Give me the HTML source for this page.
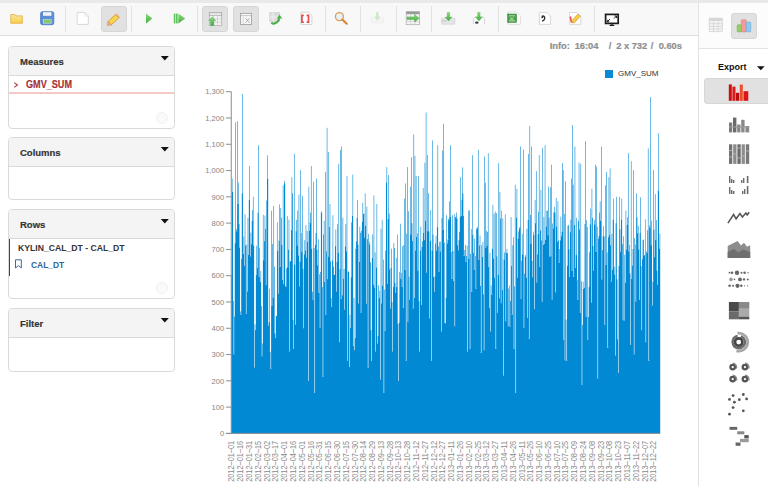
<!DOCTYPE html>
<html><head><meta charset="utf-8">
<style>
*{box-sizing:border-box}
html,body{margin:0;padding:0;width:768px;height:486px;overflow:hidden;background:#fff;font-family:"Liberation Sans",sans-serif;position:relative}
.a{position:absolute}
#topband{left:0;top:0;width:768px;height:3px;background:#e9e9e9}
#toolbar{left:0;top:3px;width:699px;height:33px;background:#f8f8f8;border-bottom:1px solid #dcdcdc}
.sep{position:absolute;top:6px;width:1px;height:26px;background:#e2e2e2}
.pbtn{position:absolute;top:6px;height:26px;background:#e1e1e1;border:1px solid #d6d6d6;border-radius:3px}
#rpanel{left:698px;top:3px;width:70px;height:483px;border-left:1px solid #e0e0e0;background:#fff}
#rtop{left:699px;top:3px;width:69px;height:46px;background:#fcfcfc;border-bottom:1px solid #e3e3e3}
.panel{position:absolute;left:8px;width:167px;border:1px solid #dadada;border-radius:4px;background:#fff;overflow:hidden}
.ph{position:absolute;left:0;top:0;width:100%;background:#f4f4f4;border-bottom:1px solid #dadada}
.pt{position:absolute;left:11px;font-size:9.5px;font-weight:bold;color:#333;line-height:10px;-webkit-text-stroke:0.15px #333}
.tri{position:absolute;width:0;height:0;border-left:4.5px solid transparent;border-right:4.5px solid transparent;border-top:5px solid #111}
.info{position:absolute;top:41.3px;font-size:9.3px;font-weight:bold;color:#8e8e8e;line-height:11px;white-space:nowrap;-webkit-text-stroke:0.2px #8e8e8e}
</style></head><body>
<div id="topband" class="a"></div>
<div id="toolbar" class="a">
</div>
<div class="sep" style="left:65px;top:6px"></div>
<div class="sep" style="left:131px;top:6px"></div>
<div class="sep" style="left:197px;top:6px"></div>
<div class="sep" style="left:325px;top:6px"></div>
<div class="sep" style="left:360px;top:6px"></div>
<div class="sep" style="left:396px;top:6px"></div>
<div class="sep" style="left:431px;top:6px"></div>
<div class="sep" style="left:498px;top:6px"></div>
<div class="sep" style="left:594px;top:6px"></div>
<div class="pbtn" style="left:101px;width:26px"></div>
<div class="pbtn" style="left:202px;width:26px"></div>
<div class="pbtn" style="left:233px;width:26px"></div>

<div id="rpanel" class="a"></div>
<div id="rtop" class="a"></div>
<div class="pbtn" style="left:731px;top:13px;width:26px;height:25.5px"></div>
<div class="a" style="left:718px;top:62px;font-size:9px;font-weight:bold;color:#111;line-height:10px">Export</div>
<div class="pbtn" style="left:704px;top:78px;width:70px;height:26px"></div>

<svg class="a" style="left:0;top:0" width="768" height="486" viewBox="0 0 768 486">
<defs>
<linearGradient id="gy" x1="0" y1="0" x2="0" y2="1"><stop offset="0" stop-color="#fbe9a6"/><stop offset="1" stop-color="#f6cf3e"/></linearGradient>
<linearGradient id="gg" x1="0" y1="0" x2="0" y2="1"><stop offset="0" stop-color="#8fdc7c"/><stop offset="1" stop-color="#3fae3f"/></linearGradient>
<linearGradient id="ga" x1="0" y1="0" x2="0" y2="1"><stop offset="0" stop-color="#777"/><stop offset="1" stop-color="#999"/></linearGradient>
</defs>
<!-- folder -->
<path d="M10.8 14.6h4.2l1 1.3h6.3v7.3H10.8z" fill="url(#gy)" stroke="#e7ad4e" stroke-width="0.9"/>
<path d="M11.3 17.2h10.9" stroke="#f3d98a" stroke-width="0.8"/>
<!-- save -->
<rect x="40.6" y="11.7" width="13.2" height="13" rx="1.8" fill="#5b8ed8" stroke="#4a78c0" stroke-width="0.8"/>
<rect x="43" y="12.2" width="8.4" height="3.6" fill="#f2f4f8"/>
<rect x="43.2" y="19.6" width="8" height="3.6" fill="#86c96b" stroke="#e6f0e0" stroke-width="0.5"/>
<!-- new doc -->
<path d="M77.2 12.4h7.6l3.5 3.5v8.5H77.2z" fill="#fff" stroke="#d4d4d4" stroke-width="0.9"/>
<path d="M84.6 12.4v3.7h3.7" fill="none" stroke="#dedede" stroke-width="0.7"/>
<!-- pencil -->
<g transform="translate(114.2 19) rotate(-43)">
<rect x="-6.2" y="-2.3" width="11" height="4.6" rx="0.6" fill="#f7d84a" stroke="#d9953a" stroke-width="0.9"/>
<path d="M-6.2 -2.3L-9.2 0L-6.2 2.3z" fill="#f4c890" stroke="#c98a4a" stroke-width="0.7"/>
<rect x="3.6" y="-2.3" width="1.8" height="4.6" fill="#e9a760"/>
</g>
<!-- play -->
<path d="M146 13.4L152.4 18.5L146 23.6z" fill="url(#gg)"/>
<!-- double play -->
<rect x="173.8" y="13.6" width="1.6" height="9.8" fill="#5cc35c"/>
<rect x="176" y="13.6" width="1.6" height="9.8" fill="#5cc35c"/>
<path d="M178.3 13.4L185.2 18.5L178.3 23.6z" fill="url(#gg)"/>
<!-- table with up arrow -->
<rect x="209.3" y="12.4" width="12.4" height="13.1" fill="#f4f4f4" stroke="#a8a8a8" stroke-width="0.7"/>
<rect x="209.3" y="12.4" width="12.4" height="3.3" fill="#e6e6e6" stroke="#a8a8a8" stroke-width="0.7"/>
<path d="M213.5 15.7v9.8M217.5 15.7v9.8M209.3 19h12.4M209.3 22.2h12.4" stroke="#c2c2c2" stroke-width="0.6"/>
<path d="M212.2 17.1L215.6 20.4H213.8V25.6H210.6V20.4H208.8z" fill="url(#gg)" stroke="#3c9a3c" stroke-width="0.4"/>
<!-- table with x -->
<rect x="240.4" y="13.3" width="11.2" height="11.3" fill="#f6f6f6" stroke="#9a9a9a" stroke-width="0.8"/>
<path d="M241 15.6h10" stroke="#bdbdbd" stroke-width="0.8"/>
<path d="M243.2 16.5v7.5" stroke="#c8c8c8" stroke-width="0.6"/>
<path d="M245.5 18.2l4 4.5M249.5 18.2l-4 4.5" stroke="#9c9c9c" stroke-width="0.8"/>
<!-- swap icon -->
<rect x="269.8" y="12.3" width="9.8" height="9.5" fill="#dedede" stroke="#c9c9c9" stroke-width="0.5"/>
<path d="M269.8 17h9.8M273 12.3v9.5" stroke="#f4f4f4" stroke-width="0.8"/>
<ellipse cx="277.3" cy="14.3" rx="1.8" ry="0.8" fill="#bcd8f5"/>
<path d="M273 23.6c2.5 0.2 5.5-1.5 6.2-5.3" fill="none" stroke="#4cae4c" stroke-width="2.3"/>
<path d="M276.8 18.2L279.6 14.8L282.4 18.6z" fill="#4cae4c"/>
<path d="M272.3 21.2L273.5 25L270.6 23.8z" fill="#4cae4c"/>
<!-- red bracket doc -->
<path d="M301 12.2h7.4l3.5 3.4v8.9H301z" fill="#fff" stroke="#d1d1d1" stroke-width="0.9"/>
<path d="M303.8 15.3h-1.9v6.8h1.9M306.6 15.3h1.9v6.8h-1.9" fill="none" stroke="#ea4b4b" stroke-width="1.7"/>
<!-- magnifier -->
<circle cx="339.4" cy="16.6" r="4" fill="#e6f1fb" stroke="#dd9d52" stroke-width="1.3"/>
<path d="M342.3 19.6L346.8 23.7" stroke="#d8893e" stroke-width="2.2" stroke-linecap="round"/>
<!-- faint down arrow -->
<path d="M371 17.3h12.7v5.6H371z" fill="#f4f4f4" stroke="#ececec" stroke-width="0.5"/>
<path d="M376.2 12.2h2.2v4.5h1.9L377.3 20.5L374.3 16.7h1.9z" fill="#c9e8c3"/>
<!-- table with right arrow -->
<rect x="406.2" y="11.7" width="13.3" height="13" fill="#f4f4f4" stroke="#a8a8a8" stroke-width="0.7"/>
<rect x="406.2" y="11.7" width="13.3" height="2.5" fill="#9a9a9a"/>
<path d="M410.6 14v10.7M415 14v10.7M406.2 21.5h13.3" stroke="#c8c8c8" stroke-width="0.6"/>
<path d="M407 16.9h7.6v-2.4l4.6 3.7-4.6 3.7v-2.4H407z" fill="url(#gg)" stroke="#3a9a3a" stroke-width="0.4"/>
<!-- down arrow to tray -->
<path d="M441.6 18.2h13.2v6H441.6z" fill="#e5e5e5" stroke="#cfcfcf" stroke-width="0.6"/>
<path d="M441.6 21h5" stroke="#c2c2c2" stroke-width="1"/>
<path d="M447.2 12.4h2.5v4.7h2.3L448.5 21L445 17.1h2.2z" fill="url(#gg)" stroke="#3f9f3f" stroke-width="0.3"/>
<!-- down arrow to doc -->
<path d="M473.4 24.3v-5.8l2-1.6h7.5l1.6 1.6v5.8" fill="#fafafa" stroke="#cfcfcf" stroke-width="0.8"/>
<ellipse cx="476.8" cy="22.6" rx="1.8" ry="1.2" fill="#3b3b3b"/>
<path d="M477.6 12.4h2.5v4.7h2.3L478.9 21L475.4 17.1h2.2z" fill="url(#gg)" stroke="#3f9f3f" stroke-width="0.3"/>
<!-- excel doc -->
<path d="M508.3 12h8.3l3.8 3.6v8.7h-12.1z" fill="#fff" stroke="#d6d6d6" stroke-width="0.8"/>
<rect x="507.6" y="14" width="9" height="8.4" fill="#4aa14a" stroke="#2f7f2f" stroke-width="0.5"/>
<path d="M509 15.8h6.2M509 20.8h6.2M510 17.5l3.5 2.5M513.5 17.5l-3.5 2.5" stroke="#d9f0d0" stroke-width="0.7"/>
<!-- page with symbol -->
<path d="M539.4 12.5h7.6l3.6 3.5v8.4h-11.2z" fill="#fff" stroke="#d1d1d1" stroke-width="0.8"/>
<path d="M541.8 16.4c1.6-0.9 3.4 0 2.9 2.2-0.3 1.3-1.4 2.2-2.6 2.6" fill="none" stroke="#2d2d2d" stroke-width="1.3"/>
<circle cx="542.3" cy="17.3" r="1" fill="#2d2d2d"/>
<!-- page with pencil -->
<path d="M569.6 12.5h7.6l3.6 3.5v8.4h-11.2z" fill="#fff" stroke="#d1d1d1" stroke-width="0.8"/>
<path d="M570.3 16.5l1.2 6" stroke="#ea4e4e" stroke-width="1.6"/>
<g transform="translate(576.3 18.3) rotate(-48)"><rect x="-4.8" y="-1.6" width="9" height="3.2" fill="#f6cf3c" stroke="#de9a3a" stroke-width="0.7"/><path d="M-4.8 -1.6L-6.8 0L-4.8 1.6z" fill="#e9a25a"/></g>
<!-- monitor -->
<rect x="605.6" y="14.4" width="12.6" height="9" fill="#fff" stroke="#1b1b1b" stroke-width="1.7"/>
<path d="M609.6 25.4h4.6M611.9 23.6v1.8" stroke="#1b1b1b" stroke-width="1.2"/>
<path d="M607.2 21.8l2.6-2.6M607.2 21.8v-2.1M607.2 21.8h2.1M616.6 16l-2.6 2.6M616.6 16v2.1M616.6 16h-2.1" stroke="#1b1b1b" stroke-width="1"/>

<!-- right panel: table icon -->
<rect x="709.3" y="18.2" width="13" height="13.4" rx="0.6" fill="#f5f5f5" stroke="#cfcfcf" stroke-width="0.8"/>
<rect x="709.3" y="18.2" width="13" height="2.8" fill="#d6d6d6"/>
<path d="M713.6 21v10.6M718 21v10.6M709.3 23.7h13M709.3 26.4h13M709.3 29h13" stroke="#d0d0d0" stroke-width="0.7"/>
<!-- chart icon -->
<rect x="737.2" y="24.8" width="4.2" height="7.1" rx="0.8" fill="#93d260" stroke="#6aa840" stroke-width="0.5"/>
<rect x="741.3" y="19.8" width="5" height="12.1" rx="0.9" fill="#f49a9a" stroke="#d97272" stroke-width="0.5"/>
<rect x="746.4" y="22" width="4.4" height="9.9" rx="0.9" fill="#8ec9f2" stroke="#63a9d9" stroke-width="0.5"/>
<!-- export arrow -->
<path d="M757 66.3h7.6L760.8 70.2z" fill="#111"/>
<!-- red bar chart -->
<rect x="728.8" y="84.4" width="3" height="16.4" fill="#c81212"/>
<rect x="732.4" y="86.6" width="3.1" height="14.2" fill="#e01a1a"/>
<rect x="736" y="92.8" width="3.2" height="8" fill="#b81010"/>
<rect x="739.8" y="84.6" width="3" height="16.2" fill="#f04a2a"/>
<rect x="743.5" y="91.2" width="4.8" height="9.6" fill="#d81616"/>
<!-- stacked bars -->
<g fill="#8a8a8a">
<rect x="729" y="122.5" width="3.2" height="9.9" fill="#7a7a7a"/>
<rect x="733" y="117.6" width="3.4" height="14.8" fill="#6a6a6a"/>
<rect x="737.2" y="124.5" width="3.2" height="7.9" fill="#858585"/>
<rect x="741.2" y="119.8" width="3.4" height="12.6" fill="#8a8a8a"/>
<rect x="745.4" y="126" width="3.8" height="6.4" fill="#8a8a8a"/>
<path d="M729 127h20.2" stroke="#999" stroke-width="1.2"/>
</g>
<!-- 100% stacked -->
<g>
<rect x="729" y="144.3" width="3.3" height="19.6" fill="#727272"/>
<rect x="733.2" y="144.3" width="3.3" height="19.6" fill="#8a8a8a"/>
<rect x="737.4" y="144.3" width="3.3" height="19.6" fill="#6a6a6a"/>
<rect x="741.6" y="144.3" width="3.3" height="19.6" fill="#8e8e8e"/>
<rect x="745.8" y="144.3" width="3.4" height="19.6" fill="#7a7a7a"/>
<path d="M729 150.5h3.3M733.2 154h3.3M737.4 148h3.3M741.6 156h3.3M745.8 151h3.4M729 157h3.3M737.4 158h3.3" stroke="#b0b0b0" stroke-width="1.2"/>
</g>
<!-- multiple bars -->
<g fill="#6a6a6a">
<rect x="729" y="176" width="1.4" height="7"/><rect x="731" y="179" width="1.4" height="4"/><rect x="733" y="180" width="1.4" height="3"/>
<rect x="741" y="180" width="1.4" height="3"/><rect x="743" y="178" width="1.4" height="5"/><rect x="746.8" y="176" width="1.6" height="7"/>
<rect x="729" y="187" width="1.4" height="7"/><rect x="731" y="190" width="1.4" height="4"/><rect x="733" y="191" width="1.4" height="3"/>
<rect x="742" y="191" width="1.4" height="3"/><rect x="744" y="189" width="1.4" height="5"/><rect x="746.8" y="186" width="1.6" height="8"/>
</g>
<!-- line chart -->
<path d="M727.9 223.2L733.6 214.5L736.1 218.8L740 213.6L742.4 217L745.9 213L747.2 215L749.2 212.2" fill="none" stroke="#555" stroke-width="1.5"/>
<!-- area chart -->
<path d="M727.7 246L733 243.3L737.6 240.9L741 245.5L744 242.8L747 246.8L750.2 245.2V257.9H727.7z" fill="#8d8d8d"/>
<path d="M727.7 252L734 249L738 252.5L743 249.5L750.2 252V257.9H727.7z" fill="#6f6f6f"/>
<!-- bubble dots -->
<g fill="#666">
<circle cx="729.5" cy="272.7" r="0.9"/><circle cx="732" cy="272.7" r="1.3"/><circle cx="737" cy="272.7" r="2.2"/><circle cx="741.5" cy="272.7" r="1"/><circle cx="744.6" cy="272.7" r="1.3"/><circle cx="748" cy="272.7" r="0.7"/>
<circle cx="731" cy="279.4" r="1.8" fill="#999"/><circle cx="734.5" cy="279.4" r="0.8"/><circle cx="740" cy="279.4" r="1.9"/><circle cx="744" cy="279.4" r="1.2"/><circle cx="747.8" cy="279.4" r="1"/>
<circle cx="729.6" cy="285.8" r="1.3"/><circle cx="733" cy="285.8" r="1"/><circle cx="737.5" cy="285.8" r="2.1"/><circle cx="741.3" cy="285.8" r="1.2"/><circle cx="744.5" cy="285.8" r="0.6"/><circle cx="747.6" cy="285.8" r="0.6"/>
</g>
<!-- treemap -->
<rect x="728.9" y="302" width="10" height="9.3" fill="#4a4a4a"/>
<rect x="738.9" y="302" width="10.4" height="6.8" fill="#8a8a8a"/>
<rect x="728.9" y="311.3" width="10" height="8" fill="#6a6a6a"/>
<rect x="738.9" y="308.8" width="10.4" height="7.8" fill="#aaa"/>
<rect x="738.9" y="316.6" width="10.4" height="2.7" fill="#555"/>
<!-- sunburst -->
<circle cx="738.7" cy="342.1" r="3.7" fill="none" stroke="#454545" stroke-width="2.6"/>
<path d="M740.82 336.27A6.20 6.20 0 1 1 737.62 335.99" fill="none" stroke="#6a6a6a" stroke-width="2.4"/>
<path d="M737.45 333.19A9.00 9.00 0 1 1 736.37 350.79" fill="none" stroke="#a8a8a8" stroke-width="2.8"/>
<!-- donuts -->
<circle cx="732.7" cy="367.1" r="2.3" fill="none" stroke="#555" stroke-width="2.3"/>
<path d="M732.70 363.20A3.90 3.90 0 0 1 736.36 368.43" fill="none" stroke="#8a8a8a" stroke-width="1.3"/>
<circle cx="745.0" cy="367.1" r="2.3" fill="none" stroke="#555" stroke-width="2.3"/>
<path d="M745.00 363.20A3.90 3.90 0 0 1 748.66 368.43" fill="none" stroke="#8a8a8a" stroke-width="1.3"/>
<circle cx="732.7" cy="379.1" r="2.3" fill="none" stroke="#555" stroke-width="2.3"/>
<path d="M732.70 375.20A3.90 3.90 0 0 1 736.36 380.43" fill="none" stroke="#8a8a8a" stroke-width="1.3"/>
<circle cx="745.0" cy="379.1" r="2.3" fill="none" stroke="#555" stroke-width="2.3"/>
<path d="M745.00 375.20A3.90 3.90 0 0 1 748.66 380.43" fill="none" stroke="#8a8a8a" stroke-width="1.3"/>
<!-- scatter -->
<g fill="#555">
<circle cx="733.1" cy="395.6" r="1.4"/><circle cx="729.5" cy="399.4" r="1.4"/><circle cx="734.4" cy="402.2" r="1.4"/><circle cx="739.3" cy="399.7" r="1.4"/><circle cx="743.3" cy="394.5" r="1.4"/><circle cx="746.6" cy="398.9" r="1.4"/><circle cx="733.1" cy="407.6" r="1.4"/><circle cx="743.3" cy="410.8" r="1.4"/><circle cx="729.5" cy="414.2" r="1.4"/>
</g>
<!-- stairs -->
<rect x="729.5" y="426.9" width="7.7" height="2.9" fill="#666"/>
<rect x="737.2" y="431.3" width="7.1" height="3" fill="#8a8a8a"/>
<rect x="744.3" y="435.1" width="4.4" height="3.3" fill="#555"/>
<rect x="740" y="438.9" width="8.7" height="3.3" fill="#9a9a9a"/>
<rect x="735.6" y="442.5" width="4.9" height="3.3" fill="#666"/>
</svg>

<!-- Measures -->
<div class="panel" style="top:46px;height:83px">
  <div class="ph" style="height:29px"></div>
  <div class="pt" style="top:10px">Measures</div>
  <svg class="a" style="left:151px;top:8px" width="10" height="6"><path d="M0.8 0.9H8.8L4.8 5.4z" fill="#111"/></svg>
  <svg class="a" style="left:0;top:0" width="30" height="50"><path d="M5.3 35.6L8.4 38L5.3 40.4" fill="none" stroke="#b04444" stroke-width="1.2"/></svg>
  <div class="a" style="left:17px;top:32.5px;font-size:10px;font-weight:bold;color:#a52f35;line-height:10px;transform:scaleX(0.91);transform-origin:0 0;-webkit-text-stroke:0.15px #a52f35">GMV_SUM</div>
  <div class="a" style="left:0;top:45px;width:167px;height:1.5px;background:#f5c8c8"></div>
  <div class="a" style="left:147px;top:65px;width:12px;height:12px;border-radius:50%;background:#fafafa;border:1px solid #f0f0f0"></div>
</div>
<div class="panel" style="top:137px;height:63px">
  <div class="ph" style="height:29px"></div>
  <div class="pt" style="top:10px">Columns</div>
  <svg class="a" style="left:151px;top:8px" width="10" height="6"><path d="M0.8 0.9H8.8L4.8 5.4z" fill="#111"/></svg>
</div>
<div class="panel" style="top:209px;height:90px">
  <div class="ph" style="height:29px"></div>
  <div class="pt" style="top:10px">Rows</div>
  <svg class="a" style="left:151px;top:8px" width="10" height="6"><path d="M0.8 0.9H8.8L4.8 5.4z" fill="#111"/></svg>
  <div class="a" style="left:0;top:29px;width:1px;height:37px;background:#444"></div>
  <div class="a" style="left:9px;top:33px;font-size:9.3px;font-weight:bold;color:#333;line-height:10px;white-space:nowrap;transform:scaleX(0.93);transform-origin:0 0">KYLIN_CAL_DT - CAL_DT</div>
  <svg class="a" style="left:5px;top:49px" width="9" height="10" viewBox="0 0 9 10"><path d="M1.5 0.8H7.3V9L4.4 6.6 1.5 9Z" fill="none" stroke="#3a6a9a" stroke-width="1"/></svg>
  <div class="a" style="left:21.8px;top:49.5px;font-size:9.8px;font-weight:bold;color:#2d6698;line-height:10px;transform:scaleX(0.86);transform-origin:0 0">CAL_DT</div>
  <div class="a" style="left:147px;top:72px;width:12px;height:12px;border-radius:50%;background:#fafafa;border:1px solid #f0f0f0"></div>
</div>
<div class="panel" style="top:308px;height:64px">
  <div class="ph" style="height:29px"></div>
  <div class="pt" style="top:10px">Filter</div>
  <svg class="a" style="left:151px;top:8px" width="10" height="6"><path d="M0.8 0.9H8.8L4.8 5.4z" fill="#111"/></svg>
</div>

<svg class="a" style="left:0;top:0" width="768" height="486" viewBox="0 0 768 486">
<g fill="#0189d4"><rect x="231" y="178.57" width="1" height="96.58" fill-opacity="0.164"/><rect x="231" y="275.16" width="1" height="158.24" fill-opacity="0.750"/><rect x="232" y="178.57" width="1" height="13.38" fill-opacity="0.422"/><rect x="232" y="191.95" width="1" height="241.45"/><rect x="233" y="191.95" width="1" height="108.94" fill-opacity="0.008"/><rect x="233" y="300.89" width="1" height="53.29" fill-opacity="0.594"/><rect x="233" y="354.18" width="1" height="79.22"/><rect x="234" y="243.23" width="1" height="73.40" fill-opacity="0.234"/><rect x="234" y="316.63" width="1" height="37.55" fill-opacity="0.820"/><rect x="234" y="354.18" width="1" height="79.22"/><rect x="235" y="122.43" width="1" height="106.45" fill-opacity="0.586"/><rect x="235" y="228.88" width="1" height="14.35" fill-opacity="0.648"/><rect x="235" y="243.23" width="1" height="190.17"/><rect x="236" y="228.88" width="1" height="2.34" fill-opacity="0.524"/><rect x="236" y="231.22" width="1" height="202.18"/><rect x="237" y="121.09" width="1" height="82.90" fill-opacity="0.586"/><rect x="237" y="203.99" width="1" height="27.23" fill-opacity="0.890"/><rect x="237" y="231.22" width="1" height="202.18"/><rect x="238" y="182.59" width="1" height="21.40" fill-opacity="0.586"/><rect x="238" y="203.99" width="1" height="19.66" fill-opacity="0.868"/><rect x="238" y="223.64" width="1" height="209.76"/><rect x="239" y="223.64" width="1" height="23.91" fill-opacity="0.454"/><rect x="239" y="247.55" width="1" height="185.85"/><rect x="240" y="247.55" width="1" height="63.83" fill-opacity="0.040"/><rect x="240" y="311.39" width="1" height="3.52" fill-opacity="0.626"/><rect x="240" y="314.90" width="1" height="118.50"/><rect x="241" y="193.29" width="1" height="65.58" fill-opacity="0.202"/><rect x="241" y="258.87" width="1" height="56.04" fill-opacity="0.788"/><rect x="241" y="314.90" width="1" height="118.50"/><rect x="242" y="93.83" width="1" height="99.46" fill-opacity="0.586"/><rect x="242" y="193.29" width="1" height="60.45" fill-opacity="0.970"/><rect x="242" y="253.74" width="1" height="179.66"/><rect x="243" y="236.27" width="1" height="17.47" fill-opacity="0.444"/><rect x="243" y="253.74" width="1" height="179.66"/><rect x="244" y="214.28" width="1" height="21.99" fill-opacity="0.272"/><rect x="244" y="236.27" width="1" height="29.58" fill-opacity="0.414"/><rect x="244" y="265.85" width="1" height="167.55"/><rect x="245" y="214.28" width="1" height="31.11" fill-opacity="0.314"/><rect x="245" y="245.38" width="1" height="68.27" fill-opacity="0.900"/><rect x="245" y="313.65" width="1" height="119.75"/><rect x="246" y="244.62" width="1" height="69.03" fill-opacity="0.514"/><rect x="246" y="313.65" width="1" height="119.75"/><rect x="247" y="217.91" width="1" height="26.71" fill-opacity="0.342"/><rect x="247" y="244.62" width="1" height="46.93" fill-opacity="0.414"/><rect x="247" y="291.55" width="1" height="141.85"/><rect x="248" y="199.97" width="1" height="17.95" fill-opacity="0.170"/><rect x="248" y="217.91" width="1" height="37.01" fill-opacity="0.414"/><rect x="248" y="254.93" width="1" height="178.47"/><rect x="249" y="166.01" width="1" height="33.96" fill-opacity="0.584"/><rect x="249" y="199.97" width="1" height="233.43"/><rect x="250" y="166.01" width="1" height="66.62" fill-opacity="0.002"/><rect x="250" y="232.63" width="1" height="23.86" fill-opacity="0.414"/><rect x="250" y="256.48" width="1" height="176.92"/><rect x="251" y="220.79" width="1" height="11.84" fill-opacity="0.240"/><rect x="251" y="232.63" width="1" height="11.58" fill-opacity="0.414"/><rect x="251" y="244.21" width="1" height="189.19"/><rect x="252" y="196.76" width="1" height="13.29" fill-opacity="0.068"/><rect x="252" y="210.05" width="1" height="10.74" fill-opacity="0.654"/><rect x="252" y="220.79" width="1" height="212.61"/><rect x="253" y="196.76" width="1" height="48.66" fill-opacity="0.518"/><rect x="253" y="245.42" width="1" height="187.98"/><rect x="254" y="245.42" width="1" height="78.86" fill-opacity="0.104"/><rect x="254" y="324.29" width="1" height="43.24" fill-opacity="0.414"/><rect x="254" y="367.53" width="1" height="65.87"/><rect x="255" y="275.02" width="1" height="49.26" fill-opacity="0.138"/><rect x="255" y="324.29" width="1" height="5.81" fill-opacity="0.414"/><rect x="255" y="330.10" width="1" height="103.30"/><rect x="256" y="245.62" width="1" height="29.40" fill-opacity="0.552"/><rect x="256" y="275.02" width="1" height="158.38"/><rect x="257" y="212.67" width="1" height="32.96" fill-opacity="0.380"/><rect x="257" y="245.62" width="1" height="22.41" fill-opacity="0.414"/><rect x="257" y="268.03" width="1" height="165.37"/><rect x="258" y="145.16" width="1" height="67.50" fill-opacity="0.586"/><rect x="258" y="212.67" width="1" height="63.78" fill-opacity="0.792"/><rect x="258" y="276.44" width="1" height="156.96"/><rect x="259" y="247.92" width="1" height="28.52" fill-opacity="0.586"/><rect x="259" y="276.44" width="1" height="5.59" fill-opacity="0.964"/><rect x="259" y="282.04" width="1" height="151.36"/><rect x="260" y="270.88" width="1" height="11.16" fill-opacity="0.450"/><rect x="260" y="282.04" width="1" height="151.36"/><rect x="261" y="270.88" width="1" height="35.17" fill-opacity="0.136"/><rect x="261" y="306.05" width="1" height="50.10" fill-opacity="0.722"/><rect x="261" y="356.15" width="1" height="77.25"/><rect x="262" y="214.67" width="1" height="128.81" fill-opacity="0.106"/><rect x="262" y="343.48" width="1" height="12.67" fill-opacity="0.692"/><rect x="262" y="356.15" width="1" height="77.25"/><rect x="263" y="214.67" width="1" height="45.53" fill-opacity="0.480"/><rect x="263" y="260.20" width="1" height="173.20"/><rect x="264" y="215.59" width="1" height="25.53" fill-opacity="0.348"/><rect x="264" y="241.12" width="1" height="19.09" fill-opacity="0.934"/><rect x="264" y="260.20" width="1" height="173.20"/><rect x="265" y="215.59" width="1" height="13.26" fill-opacity="0.238"/><rect x="265" y="228.85" width="1" height="56.27" fill-opacity="0.824"/><rect x="265" y="285.12" width="1" height="148.28"/><rect x="266" y="155.31" width="1" height="45.21" fill-opacity="0.004"/><rect x="266" y="200.52" width="1" height="84.60" fill-opacity="0.590"/><rect x="266" y="285.12" width="1" height="148.28"/><rect x="267" y="155.31" width="1" height="23.26" fill-opacity="0.582"/><rect x="267" y="178.57" width="1" height="254.83"/><rect x="268" y="178.57" width="1" height="143.46" fill-opacity="0.168"/><rect x="268" y="322.03" width="1" height="3.63" fill-opacity="0.414"/><rect x="268" y="325.67" width="1" height="107.73"/><rect x="269" y="288.63" width="1" height="33.41" fill-opacity="0.586"/><rect x="269" y="322.03" width="1" height="29.46" fill-opacity="0.926"/><rect x="269" y="351.50" width="1" height="81.90"/><rect x="270" y="351.50" width="1" height="17.37" fill-opacity="0.512"/><rect x="270" y="368.87" width="1" height="64.53"/><rect x="271" y="210.66" width="1" height="95.29" fill-opacity="0.586"/><rect x="271" y="305.96" width="1" height="62.91" fill-opacity="0.902"/><rect x="271" y="368.87" width="1" height="64.53"/><rect x="272" y="243.97" width="1" height="53.43" fill-opacity="0.586"/><rect x="272" y="297.40" width="1" height="8.56" fill-opacity="0.730"/><rect x="272" y="305.96" width="1" height="127.44"/><rect x="273" y="205.85" width="1" height="91.55" fill-opacity="0.558"/><rect x="273" y="297.40" width="1" height="136.00"/><rect x="274" y="205.85" width="1" height="60.80" fill-opacity="0.028"/><rect x="274" y="266.65" width="1" height="66.65" fill-opacity="0.614"/><rect x="274" y="333.30" width="1" height="100.10"/><rect x="275" y="315.64" width="1" height="17.66" fill-opacity="0.214"/><rect x="275" y="333.30" width="1" height="4.82" fill-opacity="0.414"/><rect x="275" y="338.12" width="1" height="95.28"/><rect x="276" y="222.25" width="1" height="93.39" fill-opacity="0.042"/><rect x="276" y="315.64" width="1" height="0.50" fill-opacity="0.414"/><rect x="276" y="316.14" width="1" height="117.26"/><rect x="277" y="222.25" width="1" height="28.49" fill-opacity="0.544"/><rect x="277" y="250.75" width="1" height="182.65"/><rect x="278" y="240.51" width="1" height="10.23" fill-opacity="0.284"/><rect x="278" y="250.75" width="1" height="42.77" fill-opacity="0.414"/><rect x="278" y="293.52" width="1" height="139.88"/><rect x="279" y="204.51" width="1" height="36.00" fill-opacity="0.586"/><rect x="279" y="240.51" width="1" height="26.23" fill-opacity="0.888"/><rect x="279" y="266.74" width="1" height="166.66"/><rect x="280" y="207.98" width="1" height="58.76" fill-opacity="0.526"/><rect x="280" y="266.74" width="1" height="166.66"/><rect x="281" y="207.98" width="1" height="9.59" fill-opacity="0.060"/><rect x="281" y="217.58" width="1" height="27.36" fill-opacity="0.646"/><rect x="281" y="244.94" width="1" height="188.46"/><rect x="282" y="185.27" width="1" height="59.67" fill-opacity="0.182"/><rect x="282" y="244.94" width="1" height="35.08" fill-opacity="0.414"/><rect x="282" y="280.03" width="1" height="153.37"/><rect x="283" y="180.73" width="1" height="4.55" fill-opacity="0.010"/><rect x="283" y="185.27" width="1" height="98.91" fill-opacity="0.414"/><rect x="283" y="284.18" width="1" height="149.22"/><rect x="284" y="180.73" width="1" height="2.68" fill-opacity="0.576"/><rect x="284" y="183.41" width="1" height="249.99"/><rect x="285" y="183.41" width="1" height="102.45" fill-opacity="0.162"/><rect x="285" y="285.85" width="1" height="0.97" fill-opacity="0.748"/><rect x="285" y="286.83" width="1" height="146.57"/><rect x="286" y="215.88" width="1" height="52.50" fill-opacity="0.080"/><rect x="286" y="268.38" width="1" height="18.44" fill-opacity="0.666"/><rect x="286" y="286.83" width="1" height="146.57"/><rect x="287" y="215.88" width="1" height="51.26" fill-opacity="0.506"/><rect x="287" y="267.14" width="1" height="166.26"/><rect x="288" y="219.71" width="1" height="29.84" fill-opacity="0.322"/><rect x="288" y="249.54" width="1" height="17.59" fill-opacity="0.908"/><rect x="288" y="267.14" width="1" height="166.26"/><rect x="289" y="219.71" width="1" height="41.55" fill-opacity="0.264"/><rect x="289" y="261.26" width="1" height="90.24" fill-opacity="0.414"/><rect x="289" y="351.50" width="1" height="81.90"/><rect x="290" y="260.76" width="1" height="0.50" fill-opacity="0.564"/><rect x="290" y="261.26" width="1" height="172.14"/><rect x="291" y="177.26" width="1" height="52.79" fill-opacity="0.392"/><rect x="291" y="230.05" width="1" height="30.71" fill-opacity="0.978"/><rect x="291" y="260.76" width="1" height="172.64"/><rect x="292" y="177.26" width="1" height="16.03" fill-opacity="0.194"/><rect x="292" y="193.29" width="1" height="126.49" fill-opacity="0.780"/><rect x="292" y="319.78" width="1" height="113.62"/><rect x="293" y="153.71" width="1" height="166.07" fill-opacity="0.048"/><rect x="293" y="319.78" width="1" height="29.04" fill-opacity="0.414"/><rect x="293" y="348.82" width="1" height="84.58"/><rect x="294" y="153.71" width="1" height="110.74" fill-opacity="0.538"/><rect x="294" y="264.44" width="1" height="168.96"/><rect x="295" y="231.13" width="1" height="33.31" fill-opacity="0.290"/><rect x="295" y="264.44" width="1" height="60.27" fill-opacity="0.414"/><rect x="295" y="324.71" width="1" height="108.69"/><rect x="296" y="219.82" width="1" height="11.31" fill-opacity="0.586"/><rect x="296" y="231.13" width="1" height="14.10" fill-opacity="0.882"/><rect x="296" y="245.23" width="1" height="188.17"/><rect x="297" y="210.66" width="1" height="34.57" fill-opacity="0.532"/><rect x="297" y="245.23" width="1" height="188.17"/><rect x="298" y="194.63" width="1" height="16.03" fill-opacity="0.360"/><rect x="298" y="210.66" width="1" height="44.87" fill-opacity="0.414"/><rect x="298" y="255.53" width="1" height="177.87"/><rect x="299" y="194.63" width="1" height="66.93" fill-opacity="0.226"/><rect x="299" y="261.56" width="1" height="24.90" fill-opacity="0.414"/><rect x="299" y="286.46" width="1" height="146.94"/><rect x="300" y="170.03" width="1" height="62.74" fill-opacity="0.586"/><rect x="300" y="232.77" width="1" height="28.79" fill-opacity="0.602"/><rect x="300" y="261.56" width="1" height="171.84"/><rect x="301" y="232.77" width="1" height="18.80" fill-opacity="0.570"/><rect x="301" y="251.57" width="1" height="181.83"/><rect x="302" y="195.97" width="1" height="55.60" fill-opacity="0.586"/><rect x="302" y="251.57" width="1" height="16.99" fill-opacity="0.742"/><rect x="302" y="268.56" width="1" height="164.84"/><rect x="303" y="254.41" width="1" height="14.15" fill-opacity="0.086"/><rect x="303" y="268.56" width="1" height="59.64" fill-opacity="0.414"/><rect x="303" y="328.21" width="1" height="105.19"/><rect x="304" y="240.10" width="1" height="14.32" fill-opacity="0.500"/><rect x="304" y="254.41" width="1" height="178.99"/><rect x="305" y="225.04" width="1" height="15.06" fill-opacity="0.328"/><rect x="305" y="240.10" width="1" height="10.32" fill-opacity="0.414"/><rect x="305" y="250.42" width="1" height="182.98"/><rect x="306" y="225.04" width="1" height="5.95" fill-opacity="0.258"/><rect x="306" y="230.99" width="1" height="26.69" fill-opacity="0.414"/><rect x="306" y="257.68" width="1" height="175.72"/><rect x="307" y="230.99" width="1" height="10.73" fill-opacity="0.430"/><rect x="307" y="241.72" width="1" height="191.68"/><rect x="308" y="186.61" width="1" height="55.11" fill-opacity="0.398"/><rect x="308" y="241.72" width="1" height="139.19" fill-opacity="0.414"/><rect x="308" y="380.91" width="1" height="52.49"/><rect x="309" y="186.61" width="1" height="35.76" fill-opacity="0.188"/><rect x="309" y="222.37" width="1" height="8.47" fill-opacity="0.414"/><rect x="309" y="230.84" width="1" height="202.56"/><rect x="310" y="166.01" width="1" height="46.56" fill-opacity="0.054"/><rect x="310" y="212.56" width="1" height="9.80" fill-opacity="0.640"/><rect x="310" y="222.37" width="1" height="211.03"/><rect x="311" y="166.01" width="1" height="82.53" fill-opacity="0.532"/><rect x="311" y="248.54" width="1" height="184.86"/><rect x="312" y="248.54" width="1" height="43.26" fill-opacity="0.118"/><rect x="312" y="291.80" width="1" height="8.29" fill-opacity="0.704"/><rect x="312" y="300.08" width="1" height="133.32"/><rect x="313" y="181.80" width="1" height="65.96" fill-opacity="0.586"/><rect x="313" y="247.76" width="1" height="52.32" fill-opacity="0.710"/><rect x="313" y="300.08" width="1" height="133.32"/><rect x="314" y="247.76" width="1" height="145.18" fill-opacity="0.462"/><rect x="314" y="392.95" width="1" height="40.45"/><rect x="315" y="232.89" width="1" height="11.96" fill-opacity="0.366"/><rect x="315" y="244.85" width="1" height="148.10" fill-opacity="0.952"/><rect x="315" y="392.95" width="1" height="40.45"/><rect x="316" y="178.57" width="1" height="54.32" fill-opacity="0.586"/><rect x="316" y="232.89" width="1" height="16.57" fill-opacity="0.806"/><rect x="316" y="249.46" width="1" height="183.94"/><rect x="317" y="239.24" width="1" height="10.22" fill-opacity="0.022"/><rect x="317" y="249.46" width="1" height="15.83" fill-opacity="0.414"/><rect x="317" y="265.30" width="1" height="168.10"/><rect x="318" y="239.24" width="1" height="53.41" fill-opacity="0.564"/><rect x="318" y="292.65" width="1" height="140.75"/><rect x="319" y="274.09" width="1" height="18.56" fill-opacity="0.586"/><rect x="319" y="292.65" width="1" height="34.77" fill-opacity="0.736"/><rect x="319" y="327.42" width="1" height="105.98"/><rect x="320" y="211.25" width="1" height="60.56" fill-opacity="0.092"/><rect x="320" y="271.81" width="1" height="55.62" fill-opacity="0.678"/><rect x="320" y="327.42" width="1" height="105.98"/><rect x="321" y="211.25" width="1" height="1.57" fill-opacity="0.494"/><rect x="321" y="212.82" width="1" height="220.58"/><rect x="322" y="212.82" width="1" height="74.27" fill-opacity="0.080"/><rect x="322" y="287.09" width="1" height="89.80" fill-opacity="0.666"/><rect x="322" y="376.89" width="1" height="56.51"/><rect x="323" y="220.72" width="1" height="13.70" fill-opacity="0.162"/><rect x="323" y="234.43" width="1" height="142.46" fill-opacity="0.748"/><rect x="323" y="376.89" width="1" height="56.51"/><rect x="324" y="220.72" width="1" height="60.94" fill-opacity="0.424"/><rect x="324" y="281.66" width="1" height="151.74"/><rect x="325" y="171.89" width="1" height="109.77" fill-opacity="0.586"/><rect x="325" y="281.66" width="1" height="33.36" fill-opacity="0.596"/><rect x="325" y="315.02" width="1" height="118.38"/><rect x="326" y="127.79" width="1" height="123.64" fill-opacity="0.232"/><rect x="326" y="251.43" width="1" height="63.59" fill-opacity="0.818"/><rect x="326" y="315.02" width="1" height="118.38"/><rect x="327" y="127.79" width="1" height="24.05" fill-opacity="0.354"/><rect x="327" y="151.84" width="1" height="127.30" fill-opacity="0.414"/><rect x="327" y="279.14" width="1" height="154.26"/><rect x="328" y="151.84" width="1" height="104.59" fill-opacity="0.526"/><rect x="328" y="256.43" width="1" height="176.97"/><rect x="329" y="203.99" width="1" height="23.07" fill-opacity="0.302"/><rect x="329" y="227.05" width="1" height="29.38" fill-opacity="0.888"/><rect x="329" y="256.43" width="1" height="176.97"/><rect x="330" y="203.99" width="1" height="57.48" fill-opacity="0.284"/><rect x="330" y="261.47" width="1" height="36.57" fill-opacity="0.870"/><rect x="330" y="298.03" width="1" height="135.37"/><rect x="331" y="298.03" width="1" height="8.97" fill-opacity="0.456"/><rect x="331" y="307.00" width="1" height="126.40"/><rect x="332" y="215.27" width="1" height="45.17" fill-opacity="0.372"/><rect x="332" y="260.44" width="1" height="46.56" fill-opacity="0.958"/><rect x="332" y="307.00" width="1" height="126.40"/><rect x="333" y="215.27" width="1" height="51.44" fill-opacity="0.214"/><rect x="333" y="266.71" width="1" height="7.88" fill-opacity="0.800"/><rect x="333" y="274.59" width="1" height="158.81"/><rect x="334" y="246.20" width="1" height="28.39" fill-opacity="0.028"/><rect x="334" y="274.59" width="1" height="0.14" fill-opacity="0.414"/><rect x="334" y="274.73" width="1" height="158.67"/><rect x="335" y="229.36" width="1" height="16.83" fill-opacity="0.442"/><rect x="335" y="246.20" width="1" height="187.20"/><rect x="336" y="229.36" width="1" height="32.54" fill-opacity="0.144"/><rect x="336" y="261.90" width="1" height="29.70" fill-opacity="0.414"/><rect x="336" y="291.60" width="1" height="141.80"/><rect x="337" y="224.11" width="1" height="28.85" fill-opacity="0.586"/><rect x="337" y="252.96" width="1" height="8.95" fill-opacity="0.684"/><rect x="337" y="261.90" width="1" height="171.50"/><rect x="338" y="163.88" width="1" height="89.08" fill-opacity="0.512"/><rect x="338" y="252.96" width="1" height="180.44"/><rect x="339" y="163.88" width="1" height="104.87" fill-opacity="0.073"/><rect x="339" y="268.74" width="1" height="73.39" fill-opacity="0.414"/><rect x="339" y="342.14" width="1" height="91.26"/><rect x="340" y="149.97" width="1" height="118.77" fill-opacity="0.586"/><rect x="340" y="268.74" width="1" height="30.14" fill-opacity="0.831"/><rect x="340" y="298.89" width="1" height="134.51"/><rect x="341" y="146.50" width="1" height="152.38" fill-opacity="0.583"/><rect x="341" y="298.89" width="1" height="134.51"/><rect x="342" y="146.50" width="1" height="71.31" fill-opacity="0.003"/><rect x="342" y="217.82" width="1" height="77.46" fill-opacity="0.414"/><rect x="342" y="295.28" width="1" height="138.12"/><rect x="343" y="217.82" width="1" height="51.10" fill-opacity="0.175"/><rect x="343" y="268.92" width="1" height="9.76" fill-opacity="0.414"/><rect x="343" y="278.68" width="1" height="154.72"/><rect x="344" y="246.34" width="1" height="22.58" fill-opacity="0.067"/><rect x="344" y="268.92" width="1" height="40.58" fill-opacity="0.414"/><rect x="344" y="309.50" width="1" height="123.90"/><rect x="345" y="224.05" width="1" height="22.29" fill-opacity="0.481"/><rect x="345" y="246.34" width="1" height="187.06"/><rect x="346" y="175.92" width="1" height="48.13" fill-opacity="0.309"/><rect x="346" y="224.05" width="1" height="27.32" fill-opacity="0.414"/><rect x="346" y="251.37" width="1" height="182.03"/><rect x="347" y="175.92" width="1" height="95.68" fill-opacity="0.277"/><rect x="347" y="271.60" width="1" height="89.35" fill-opacity="0.414"/><rect x="347" y="360.95" width="1" height="72.45"/><rect x="348" y="271.51" width="1" height="0.09" fill-opacity="0.551"/><rect x="348" y="271.60" width="1" height="161.80"/><rect x="349" y="271.51" width="1" height="43.05" fill-opacity="0.035"/><rect x="349" y="314.56" width="1" height="52.55" fill-opacity="0.414"/><rect x="349" y="367.11" width="1" height="66.29"/><rect x="350" y="277.29" width="1" height="37.27" fill-opacity="0.207"/><rect x="350" y="314.56" width="1" height="13.18" fill-opacity="0.414"/><rect x="350" y="327.74" width="1" height="105.66"/><rect x="351" y="215.99" width="1" height="6.43" fill-opacity="0.035"/><rect x="351" y="222.41" width="1" height="54.87" fill-opacity="0.621"/><rect x="351" y="277.29" width="1" height="156.11"/><rect x="352" y="174.58" width="1" height="41.41" fill-opacity="0.449"/><rect x="352" y="215.99" width="1" height="217.41"/><rect x="353" y="174.58" width="1" height="123.33" fill-opacity="0.137"/><rect x="353" y="297.91" width="1" height="48.25" fill-opacity="0.414"/><rect x="353" y="346.16" width="1" height="87.24"/><rect x="354" y="297.91" width="1" height="40.21" fill-opacity="0.309"/><rect x="354" y="338.12" width="1" height="12.04" fill-opacity="0.414"/><rect x="354" y="350.16" width="1" height="83.24"/><rect x="355" y="248.44" width="1" height="89.68" fill-opacity="0.519"/><rect x="355" y="338.12" width="1" height="95.28"/><rect x="356" y="217.74" width="1" height="23.55" fill-opacity="0.347"/><rect x="356" y="241.29" width="1" height="7.15" fill-opacity="0.933"/><rect x="356" y="248.44" width="1" height="184.96"/><rect x="357" y="199.97" width="1" height="17.77" fill-opacity="0.586"/><rect x="357" y="217.74" width="1" height="26.65" fill-opacity="0.825"/><rect x="357" y="244.39" width="1" height="189.01"/><rect x="358" y="244.39" width="1" height="17.62" fill-opacity="0.411"/><rect x="358" y="262.01" width="1" height="41.41" fill-opacity="0.414"/><rect x="358" y="303.41" width="1" height="129.99"/><rect x="359" y="226.61" width="1" height="35.39" fill-opacity="0.417"/><rect x="359" y="262.01" width="1" height="171.39"/><rect x="360" y="226.61" width="1" height="6.19" fill-opacity="0.169"/><rect x="360" y="232.80" width="1" height="80.14" fill-opacity="0.755"/><rect x="360" y="312.94" width="1" height="120.46"/><rect x="361" y="221.74" width="1" height="9.01" fill-opacity="0.073"/><rect x="361" y="230.75" width="1" height="82.19" fill-opacity="0.659"/><rect x="361" y="312.94" width="1" height="120.46"/><rect x="362" y="202.65" width="1" height="19.09" fill-opacity="0.487"/><rect x="362" y="221.74" width="1" height="211.66"/><rect x="363" y="202.65" width="1" height="10.75" fill-opacity="0.099"/><rect x="363" y="213.40" width="1" height="0.59" fill-opacity="0.414"/><rect x="363" y="213.99" width="1" height="219.41"/><rect x="364" y="193.29" width="1" height="20.11" fill-opacity="0.143"/><rect x="364" y="213.40" width="1" height="24.17" fill-opacity="0.414"/><rect x="364" y="237.57" width="1" height="195.83"/><rect x="365" y="193.29" width="1" height="32.65" fill-opacity="0.443"/><rect x="365" y="225.94" width="1" height="207.46"/><rect x="366" y="206.67" width="1" height="19.27" fill-opacity="0.385"/><rect x="366" y="225.94" width="1" height="77.66" fill-opacity="0.414"/><rect x="366" y="303.60" width="1" height="129.80"/><rect x="367" y="206.67" width="1" height="32.51" fill-opacity="0.201"/><rect x="367" y="239.18" width="1" height="128.61" fill-opacity="0.787"/><rect x="367" y="367.79" width="1" height="65.61"/><rect x="368" y="233.81" width="1" height="7.86" fill-opacity="0.586"/><rect x="368" y="241.67" width="1" height="126.12" fill-opacity="0.627"/><rect x="368" y="367.79" width="1" height="65.61"/><rect x="369" y="241.67" width="1" height="2.83" fill-opacity="0.545"/><rect x="369" y="244.49" width="1" height="188.91"/><rect x="370" y="244.49" width="1" height="17.84" fill-opacity="0.131"/><rect x="370" y="262.34" width="1" height="67.76" fill-opacity="0.717"/><rect x="370" y="330.10" width="1" height="103.30"/><rect x="371" y="258.05" width="1" height="72.05" fill-opacity="0.111"/><rect x="371" y="330.10" width="1" height="30.75" fill-opacity="0.414"/><rect x="371" y="360.85" width="1" height="72.55"/><rect x="372" y="234.44" width="1" height="23.61" fill-opacity="0.525"/><rect x="372" y="258.05" width="1" height="175.35"/><rect x="373" y="195.42" width="1" height="39.02" fill-opacity="0.353"/><rect x="373" y="234.44" width="1" height="50.22" fill-opacity="0.414"/><rect x="373" y="284.66" width="1" height="148.74"/><rect x="374" y="195.42" width="1" height="56.84" fill-opacity="0.233"/><rect x="374" y="252.26" width="1" height="35.38" fill-opacity="0.414"/><rect x="374" y="287.63" width="1" height="145.77"/><rect x="375" y="252.26" width="1" height="15.18" fill-opacity="0.405"/><rect x="375" y="267.44" width="1" height="84.06" fill-opacity="0.414"/><rect x="375" y="351.50" width="1" height="81.90"/><rect x="376" y="203.99" width="1" height="63.45" fill-opacity="0.423"/><rect x="376" y="267.44" width="1" height="165.96"/><rect x="377" y="203.99" width="1" height="131.84" fill-opacity="0.163"/><rect x="377" y="335.82" width="1" height="7.66" fill-opacity="0.414"/><rect x="377" y="343.48" width="1" height="89.92"/><rect x="378" y="285.15" width="1" height="12.59" fill-opacity="0.586"/><rect x="378" y="297.74" width="1" height="38.08" fill-opacity="0.665"/><rect x="378" y="335.82" width="1" height="97.58"/><rect x="379" y="290.62" width="1" height="7.12" fill-opacity="0.493"/><rect x="379" y="297.74" width="1" height="135.66"/><rect x="380" y="228.80" width="1" height="61.82" fill-opacity="0.321"/><rect x="380" y="290.62" width="1" height="88.95" fill-opacity="0.414"/><rect x="380" y="379.57" width="1" height="53.83"/><rect x="381" y="219.80" width="1" height="8.99" fill-opacity="0.149"/><rect x="381" y="228.80" width="1" height="74.60" fill-opacity="0.414"/><rect x="381" y="303.39" width="1" height="130.01"/><rect x="382" y="219.80" width="1" height="65.75" fill-opacity="0.437"/><rect x="382" y="285.55" width="1" height="147.85"/><rect x="383" y="259.62" width="1" height="25.93" fill-opacity="0.586"/><rect x="383" y="285.55" width="1" height="107.40" fill-opacity="0.609"/><rect x="383" y="392.95" width="1" height="40.45"/><rect x="384" y="289.57" width="1" height="41.13" fill-opacity="0.586"/><rect x="384" y="330.70" width="1" height="62.25" fill-opacity="0.805"/><rect x="384" y="392.95" width="1" height="40.45"/><rect x="385" y="182.59" width="1" height="68.01" fill-opacity="0.047"/><rect x="385" y="250.60" width="1" height="80.10" fill-opacity="0.633"/><rect x="385" y="330.70" width="1" height="102.70"/><rect x="386" y="167.08" width="1" height="15.51" fill-opacity="0.461"/><rect x="386" y="182.59" width="1" height="250.81"/><rect x="387" y="167.08" width="1" height="51.85" fill-opacity="0.125"/><rect x="387" y="218.94" width="1" height="64.89" fill-opacity="0.414"/><rect x="387" y="283.83" width="1" height="149.57"/><rect x="388" y="175.10" width="1" height="38.17" fill-opacity="0.586"/><rect x="388" y="213.27" width="1" height="5.67" fill-opacity="0.703"/><rect x="388" y="218.94" width="1" height="214.46"/><rect x="389" y="213.27" width="1" height="56.07" fill-opacity="0.469"/><rect x="389" y="269.34" width="1" height="164.06"/><rect x="390" y="267.95" width="1" height="1.39" fill-opacity="0.359"/><rect x="390" y="269.34" width="1" height="39.08" fill-opacity="0.414"/><rect x="390" y="308.42" width="1" height="124.98"/><rect x="391" y="248.58" width="1" height="19.37" fill-opacity="0.586"/><rect x="391" y="267.95" width="1" height="34.01" fill-opacity="0.813"/><rect x="391" y="301.96" width="1" height="131.44"/><rect x="392" y="287.05" width="1" height="14.91" fill-opacity="0.015"/><rect x="392" y="301.96" width="1" height="49.54" fill-opacity="0.414"/><rect x="392" y="351.50" width="1" height="81.90"/><rect x="393" y="243.04" width="1" height="44.01" fill-opacity="0.429"/><rect x="393" y="287.05" width="1" height="146.35"/><rect x="394" y="243.04" width="1" height="5.03" fill-opacity="0.157"/><rect x="394" y="248.07" width="1" height="34.94" fill-opacity="0.743"/><rect x="394" y="283.01" width="1" height="150.39"/><rect x="395" y="257.69" width="1" height="25.31" fill-opacity="0.085"/><rect x="395" y="283.01" width="1" height="9.74" fill-opacity="0.414"/><rect x="395" y="292.74" width="1" height="140.66"/><rect x="396" y="257.69" width="1" height="29.35" fill-opacity="0.501"/><rect x="396" y="287.05" width="1" height="146.35"/><rect x="397" y="234.56" width="1" height="52.49" fill-opacity="0.586"/><rect x="397" y="287.05" width="1" height="37.06" fill-opacity="0.673"/><rect x="397" y="324.11" width="1" height="109.29"/><rect x="398" y="322.51" width="1" height="1.60" fill-opacity="0.155"/><rect x="398" y="324.11" width="1" height="56.80" fill-opacity="0.414"/><rect x="398" y="380.91" width="1" height="52.49"/><rect x="399" y="272.09" width="1" height="50.42" fill-opacity="0.569"/><rect x="399" y="322.51" width="1" height="110.89"/><rect x="400" y="223.73" width="1" height="48.35" fill-opacity="0.586"/><rect x="400" y="272.09" width="1" height="6.66" fill-opacity="0.603"/><rect x="400" y="278.75" width="1" height="154.65"/><rect x="401" y="272.80" width="1" height="5.95" fill-opacity="0.586"/><rect x="401" y="278.75" width="1" height="8.18" fill-opacity="0.775"/><rect x="401" y="286.93" width="1" height="146.47"/><rect x="402" y="246.27" width="1" height="40.66" fill-opacity="0.586"/><rect x="402" y="286.93" width="1" height="20.62" fill-opacity="0.947"/><rect x="402" y="307.56" width="1" height="125.84"/><rect x="403" y="245.01" width="1" height="62.54" fill-opacity="0.467"/><rect x="403" y="307.56" width="1" height="125.84"/><rect x="404" y="198.63" width="1" height="46.39" fill-opacity="0.586"/><rect x="404" y="245.01" width="1" height="24.69" fill-opacity="0.705"/><rect x="404" y="269.70" width="1" height="163.70"/><rect x="405" y="183.41" width="1" height="86.29" fill-opacity="0.586"/><rect x="405" y="269.70" width="1" height="91.15" fill-opacity="0.877"/><rect x="405" y="360.85" width="1" height="72.55"/><rect x="406" y="233.52" width="1" height="127.34" fill-opacity="0.537"/><rect x="406" y="360.85" width="1" height="72.55"/><rect x="407" y="167.08" width="1" height="66.43" fill-opacity="0.586"/><rect x="407" y="233.52" width="1" height="88.57" fill-opacity="0.635"/><rect x="407" y="322.08" width="1" height="111.32"/><rect x="408" y="211.22" width="1" height="65.13" fill-opacity="0.586"/><rect x="408" y="276.35" width="1" height="45.73" fill-opacity="0.779"/><rect x="408" y="322.08" width="1" height="111.32"/><rect x="409" y="186.61" width="1" height="89.74" fill-opacity="0.021"/><rect x="409" y="276.35" width="1" height="23.31" fill-opacity="0.414"/><rect x="409" y="299.66" width="1" height="133.74"/><rect x="410" y="186.61" width="1" height="47.62" fill-opacity="0.565"/><rect x="410" y="234.23" width="1" height="199.17"/><rect x="411" y="157.20" width="1" height="65.90" fill-opacity="0.586"/><rect x="411" y="223.10" width="1" height="11.13" fill-opacity="0.849"/><rect x="411" y="234.23" width="1" height="199.17"/><rect x="412" y="223.10" width="1" height="17.99" fill-opacity="0.323"/><rect x="412" y="241.09" width="1" height="67.22" fill-opacity="0.909"/><rect x="412" y="308.31" width="1" height="125.09"/><rect x="413" y="134.47" width="1" height="173.85" fill-opacity="0.505"/><rect x="413" y="308.31" width="1" height="125.09"/><rect x="414" y="134.47" width="1" height="21.40" fill-opacity="0.081"/><rect x="414" y="155.86" width="1" height="141.97" fill-opacity="0.414"/><rect x="414" y="297.83" width="1" height="135.57"/><rect x="415" y="155.86" width="1" height="20.06" fill-opacity="0.253"/><rect x="415" y="175.92" width="1" height="74.72" fill-opacity="0.414"/><rect x="415" y="250.63" width="1" height="182.77"/><rect x="416" y="175.92" width="1" height="60.82" fill-opacity="0.425"/><rect x="416" y="236.73" width="1" height="196.67"/><rect x="417" y="233.43" width="1" height="3.31" fill-opacity="0.586"/><rect x="417" y="236.73" width="1" height="33.66" fill-opacity="0.597"/><rect x="417" y="270.40" width="1" height="163.00"/><rect x="418" y="175.92" width="1" height="94.48" fill-opacity="0.586"/><rect x="418" y="270.40" width="1" height="30.66" fill-opacity="0.769"/><rect x="418" y="301.06" width="1" height="132.34"/><rect x="419" y="250.52" width="1" height="50.54" fill-opacity="0.059"/><rect x="419" y="301.06" width="1" height="50.44" fill-opacity="0.414"/><rect x="419" y="351.50" width="1" height="81.90"/><rect x="420" y="226.80" width="1" height="23.72" fill-opacity="0.473"/><rect x="420" y="250.52" width="1" height="182.88"/><rect x="421" y="226.80" width="1" height="19.91" fill-opacity="0.113"/><rect x="421" y="246.71" width="1" height="58.28" fill-opacity="0.414"/><rect x="421" y="305.00" width="1" height="128.40"/><rect x="422" y="187.95" width="1" height="53.25" fill-opacity="0.129"/><rect x="422" y="241.21" width="1" height="5.51" fill-opacity="0.715"/><rect x="422" y="246.71" width="1" height="186.69"/><rect x="423" y="187.95" width="1" height="44.94" fill-opacity="0.457"/><rect x="423" y="232.90" width="1" height="200.50"/><rect x="424" y="162.54" width="1" height="70.36" fill-opacity="0.371"/><rect x="424" y="232.90" width="1" height="7.21" fill-opacity="0.414"/><rect x="424" y="240.10" width="1" height="193.30"/><rect x="425" y="112.54" width="1" height="49.99" fill-opacity="0.199"/><rect x="425" y="162.54" width="1" height="58.12" fill-opacity="0.414"/><rect x="425" y="220.66" width="1" height="212.74"/><rect x="426" y="112.54" width="1" height="42.50" fill-opacity="0.387"/><rect x="426" y="155.05" width="1" height="117.54" fill-opacity="0.414"/><rect x="426" y="272.59" width="1" height="160.81"/><rect x="427" y="155.05" width="1" height="76.05" fill-opacity="0.559"/><rect x="427" y="231.10" width="1" height="202.30"/><rect x="428" y="193.29" width="1" height="37.81" fill-opacity="0.586"/><rect x="428" y="231.10" width="1" height="0.16" fill-opacity="0.731"/><rect x="428" y="231.26" width="1" height="202.14"/><rect x="429" y="231.26" width="1" height="9.63" fill-opacity="0.317"/><rect x="429" y="240.89" width="1" height="77.51" fill-opacity="0.414"/><rect x="429" y="318.40" width="1" height="115.00"/><rect x="430" y="210.09" width="1" height="30.80" fill-opacity="0.511"/><rect x="430" y="240.89" width="1" height="192.51"/><rect x="431" y="210.09" width="1" height="40.19" fill-opacity="0.075"/><rect x="431" y="250.28" width="1" height="110.57" fill-opacity="0.414"/><rect x="431" y="360.85" width="1" height="72.55"/><rect x="432" y="140.35" width="1" height="93.97" fill-opacity="0.586"/><rect x="432" y="234.32" width="1" height="15.96" fill-opacity="0.753"/><rect x="432" y="250.28" width="1" height="183.12"/><rect x="433" y="234.32" width="1" height="42.71" fill-opacity="0.419"/><rect x="433" y="277.03" width="1" height="156.37"/><rect x="434" y="276.16" width="1" height="0.88" fill-opacity="0.409"/><rect x="434" y="277.03" width="1" height="14.56" fill-opacity="0.414"/><rect x="434" y="291.59" width="1" height="141.81"/><rect x="435" y="235.82" width="1" height="7.66" fill-opacity="0.237"/><rect x="435" y="243.48" width="1" height="32.67" fill-opacity="0.823"/><rect x="435" y="276.16" width="1" height="157.24"/><rect x="436" y="227.12" width="1" height="8.70" fill-opacity="0.065"/><rect x="436" y="235.82" width="1" height="15.07" fill-opacity="0.414"/><rect x="436" y="250.89" width="1" height="182.51"/><rect x="437" y="145.16" width="1" height="81.95" fill-opacity="0.479"/><rect x="437" y="227.12" width="1" height="206.28"/><rect x="438" y="145.16" width="1" height="101.28" fill-opacity="0.107"/><rect x="438" y="246.44" width="1" height="25.20" fill-opacity="0.693"/><rect x="438" y="271.64" width="1" height="161.76"/><rect x="439" y="241.82" width="1" height="9.51" fill-opacity="0.586"/><rect x="439" y="251.33" width="1" height="20.31" fill-opacity="0.721"/><rect x="439" y="271.64" width="1" height="161.76"/><rect x="440" y="241.48" width="1" height="9.84" fill-opacity="0.549"/><rect x="440" y="251.33" width="1" height="182.07"/><rect x="441" y="218.04" width="1" height="23.44" fill-opacity="0.377"/><rect x="441" y="241.48" width="1" height="89.96" fill-opacity="0.414"/><rect x="441" y="331.44" width="1" height="101.96"/><rect x="442" y="150.50" width="1" height="67.54" fill-opacity="0.586"/><rect x="442" y="218.04" width="1" height="11.55" fill-opacity="0.795"/><rect x="442" y="229.59" width="1" height="203.81"/><rect x="443" y="123.77" width="1" height="105.82" fill-opacity="0.586"/><rect x="443" y="229.59" width="1" height="12.76" fill-opacity="0.967"/><rect x="443" y="242.35" width="1" height="191.05"/><rect x="444" y="242.35" width="1" height="80.45" fill-opacity="0.553"/><rect x="444" y="322.79" width="1" height="110.61"/><rect x="445" y="297.58" width="1" height="25.22" fill-opacity="0.275"/><rect x="445" y="322.79" width="1" height="0.63" fill-opacity="0.414"/><rect x="445" y="323.43" width="1" height="109.97"/><rect x="446" y="215.17" width="1" height="28.28" fill-opacity="0.586"/><rect x="446" y="243.45" width="1" height="54.13" fill-opacity="0.689"/><rect x="446" y="297.58" width="1" height="135.82"/><rect x="447" y="239.49" width="1" height="3.96" fill-opacity="0.517"/><rect x="447" y="243.45" width="1" height="189.95"/><rect x="448" y="218.80" width="1" height="1.33" fill-opacity="0.586"/><rect x="448" y="220.13" width="1" height="19.36" fill-opacity="0.931"/><rect x="448" y="239.49" width="1" height="193.91"/><rect x="449" y="201.31" width="1" height="15.38" fill-opacity="0.586"/><rect x="449" y="216.69" width="1" height="3.45" fill-opacity="0.759"/><rect x="449" y="220.13" width="1" height="213.27"/><rect x="450" y="145.16" width="1" height="71.52" fill-opacity="0.586"/><rect x="450" y="216.69" width="1" height="35.09"/><rect x="450" y="251.77" width="1" height="181.63"/><rect x="451" y="251.77" width="1" height="26.96" fill-opacity="0.585"/><rect x="451" y="278.73" width="1" height="154.67"/><rect x="452" y="215.19" width="1" height="35.72" fill-opacity="0.586"/><rect x="452" y="250.91" width="1" height="27.83" fill-opacity="0.829"/><rect x="452" y="278.73" width="1" height="154.67"/><rect x="453" y="213.87" width="1" height="37.04" fill-opacity="0.071"/><rect x="453" y="250.91" width="1" height="30.18" fill-opacity="0.414"/><rect x="453" y="281.09" width="1" height="152.31"/><rect x="454" y="213.87" width="1" height="112.24" fill-opacity="0.515"/><rect x="454" y="326.11" width="1" height="107.29"/><rect x="455" y="216.82" width="1" height="0.27" fill-opacity="0.586"/><rect x="455" y="217.09" width="1" height="109.01" fill-opacity="0.899"/><rect x="455" y="326.11" width="1" height="107.29"/><rect x="456" y="212.53" width="1" height="4.56" fill-opacity="0.586"/><rect x="456" y="217.09" width="1" height="1.32" fill-opacity="0.859"/><rect x="456" y="218.41" width="1" height="214.99"/><rect x="457" y="218.41" width="1" height="26.78" fill-opacity="0.445"/><rect x="457" y="245.20" width="1" height="188.20"/><rect x="458" y="240.08" width="1" height="5.12" fill-opacity="0.383"/><rect x="458" y="245.20" width="1" height="5.14" fill-opacity="0.414"/><rect x="458" y="250.34" width="1" height="183.06"/><rect x="459" y="216.51" width="1" height="15.48" fill-opacity="0.211"/><rect x="459" y="232.00" width="1" height="8.09" fill-opacity="0.797"/><rect x="459" y="240.08" width="1" height="193.32"/><rect x="460" y="177.26" width="1" height="38.68" fill-opacity="0.586"/><rect x="460" y="215.94" width="1" height="0.58" fill-opacity="0.625"/><rect x="460" y="216.51" width="1" height="216.89"/><rect x="461" y="199.97" width="1" height="15.97" fill-opacity="0.453"/><rect x="461" y="215.94" width="1" height="217.46"/><rect x="462" y="167.35" width="1" height="25.94" fill-opacity="0.586"/><rect x="462" y="193.29" width="1" height="6.68" fill-opacity="0.867"/><rect x="462" y="199.97" width="1" height="233.43"/><rect x="463" y="193.29" width="1" height="22.67" fill-opacity="0.305"/><rect x="463" y="215.96" width="1" height="39.62" fill-opacity="0.891"/><rect x="463" y="255.59" width="1" height="177.81"/><rect x="464" y="249.94" width="1" height="5.65" fill-opacity="0.523"/><rect x="464" y="255.59" width="1" height="177.81"/><rect x="465" y="244.94" width="1" height="5.00" fill-opacity="0.586"/><rect x="465" y="249.94" width="1" height="11.74" fill-opacity="0.649"/><rect x="465" y="261.68" width="1" height="171.72"/><rect x="466" y="245.57" width="1" height="10.27" fill-opacity="0.179"/><rect x="466" y="255.84" width="1" height="5.84" fill-opacity="0.765"/><rect x="466" y="261.68" width="1" height="171.72"/><rect x="467" y="210.55" width="1" height="35.02" fill-opacity="0.007"/><rect x="467" y="245.57" width="1" height="105.97" fill-opacity="0.414"/><rect x="467" y="351.55" width="1" height="81.85"/><rect x="468" y="210.55" width="1" height="47.94" fill-opacity="0.579"/><rect x="468" y="258.49" width="1" height="174.91"/><rect x="469" y="210.26" width="1" height="48.23" fill-opacity="0.586"/><rect x="469" y="258.49" width="1" height="90.32" fill-opacity="0.751"/><rect x="469" y="348.82" width="1" height="84.58"/><rect x="470" y="229.11" width="1" height="24.68" fill-opacity="0.077"/><rect x="470" y="253.78" width="1" height="95.03" fill-opacity="0.663"/><rect x="470" y="348.82" width="1" height="84.58"/><rect x="471" y="229.11" width="1" height="62.70" fill-opacity="0.509"/><rect x="471" y="291.80" width="1" height="141.60"/><rect x="472" y="155.05" width="1" height="79.43" fill-opacity="0.586"/><rect x="472" y="234.48" width="1" height="57.33" fill-opacity="0.905"/><rect x="472" y="291.80" width="1" height="141.60"/><rect x="473" y="234.48" width="1" height="18.52" fill-opacity="0.267"/><rect x="473" y="253.00" width="1" height="16.95" fill-opacity="0.853"/><rect x="473" y="269.95" width="1" height="163.45"/><rect x="474" y="238.41" width="1" height="31.54" fill-opacity="0.561"/><rect x="474" y="269.95" width="1" height="163.45"/><rect x="475" y="238.41" width="1" height="17.46" fill-opacity="0.025"/><rect x="475" y="255.87" width="1" height="32.64" fill-opacity="0.611"/><rect x="475" y="288.51" width="1" height="144.89"/><rect x="476" y="228.33" width="1" height="0.73" fill-opacity="0.586"/><rect x="476" y="229.06" width="1" height="59.45" fill-opacity="0.803"/><rect x="476" y="288.51" width="1" height="144.89"/><rect x="477" y="149.71" width="1" height="77.05" fill-opacity="0.045"/><rect x="477" y="226.76" width="1" height="2.30" fill-opacity="0.631"/><rect x="477" y="229.06" width="1" height="204.34"/><rect x="478" y="149.71" width="1" height="110.11" fill-opacity="0.541"/><rect x="478" y="259.82" width="1" height="173.58"/><rect x="479" y="235.53" width="1" height="9.95" fill-opacity="0.287"/><rect x="479" y="245.48" width="1" height="14.33" fill-opacity="0.873"/><rect x="479" y="259.82" width="1" height="173.58"/><rect x="480" y="235.53" width="1" height="50.40" fill-opacity="0.299"/><rect x="480" y="285.94" width="1" height="66.90" fill-opacity="0.885"/><rect x="480" y="352.84" width="1" height="80.56"/><rect x="481" y="244.84" width="1" height="108.00" fill-opacity="0.529"/><rect x="481" y="352.84" width="1" height="80.56"/><rect x="482" y="241.87" width="1" height="2.97" fill-opacity="0.357"/><rect x="482" y="244.84" width="1" height="12.06" fill-opacity="0.414"/><rect x="482" y="256.90" width="1" height="176.50"/><rect x="483" y="241.87" width="1" height="52.50" fill-opacity="0.229"/><rect x="483" y="294.37" width="1" height="55.78" fill-opacity="0.815"/><rect x="483" y="350.16" width="1" height="83.24"/><rect x="484" y="156.65" width="1" height="25.94" fill-opacity="0.586"/><rect x="484" y="182.59" width="1" height="167.56" fill-opacity="0.599"/><rect x="484" y="350.16" width="1" height="83.24"/><rect x="485" y="182.59" width="1" height="64.91" fill-opacity="0.573"/><rect x="485" y="247.50" width="1" height="185.90"/><rect x="486" y="230.59" width="1" height="14.81" fill-opacity="0.586"/><rect x="486" y="245.40" width="1" height="2.10" fill-opacity="0.841"/><rect x="486" y="247.50" width="1" height="185.90"/><rect x="487" y="153.18" width="1" height="78.84" fill-opacity="0.083"/><rect x="487" y="232.01" width="1" height="13.39" fill-opacity="0.669"/><rect x="487" y="245.40" width="1" height="188.00"/><rect x="488" y="153.18" width="1" height="113.73" fill-opacity="0.503"/><rect x="488" y="266.91" width="1" height="166.49"/><rect x="489" y="252.83" width="1" height="14.08" fill-opacity="0.325"/><rect x="489" y="266.91" width="1" height="41.23" fill-opacity="0.414"/><rect x="489" y="308.13" width="1" height="125.27"/><rect x="490" y="252.83" width="1" height="32.50" fill-opacity="0.261"/><rect x="490" y="285.32" width="1" height="46.12" fill-opacity="0.414"/><rect x="490" y="331.44" width="1" height="101.96"/><rect x="491" y="285.32" width="1" height="9.21" fill-opacity="0.433"/><rect x="491" y="294.53" width="1" height="138.87"/><rect x="492" y="204.78" width="1" height="44.07" fill-opacity="0.395"/><rect x="492" y="248.84" width="1" height="45.69" fill-opacity="0.981"/><rect x="492" y="294.53" width="1" height="138.87"/><rect x="493" y="204.78" width="1" height="8.78" fill-opacity="0.191"/><rect x="493" y="213.56" width="1" height="44.99" fill-opacity="0.414"/><rect x="493" y="258.55" width="1" height="174.85"/><rect x="494" y="211.58" width="1" height="1.98" fill-opacity="0.051"/><rect x="494" y="213.56" width="1" height="64.40" fill-opacity="0.414"/><rect x="494" y="277.96" width="1" height="155.44"/><rect x="495" y="211.58" width="1" height="137.23" fill-opacity="0.535"/><rect x="495" y="348.82" width="1" height="84.58"/><rect x="496" y="213.04" width="1" height="43.23" fill-opacity="0.586"/><rect x="496" y="256.26" width="1" height="92.55" fill-opacity="0.879"/><rect x="496" y="348.82" width="1" height="84.58"/><rect x="497" y="256.26" width="1" height="18.40" fill-opacity="0.293"/><rect x="497" y="274.66" width="1" height="38.05" fill-opacity="0.414"/><rect x="497" y="312.71" width="1" height="120.69"/><rect x="498" y="163.06" width="1" height="111.60" fill-opacity="0.535"/><rect x="498" y="274.66" width="1" height="158.74"/><rect x="499" y="163.06" width="1" height="28.89" fill-opacity="0.051"/><rect x="499" y="191.95" width="1" height="106.24" fill-opacity="0.414"/><rect x="499" y="298.19" width="1" height="135.21"/><rect x="500" y="191.95" width="1" height="26.66" fill-opacity="0.223"/><rect x="500" y="218.61" width="1" height="84.51" fill-opacity="0.809"/><rect x="500" y="303.12" width="1" height="130.28"/><rect x="501" y="210.66" width="1" height="79.33" fill-opacity="0.586"/><rect x="501" y="289.99" width="1" height="13.13" fill-opacity="0.605"/><rect x="501" y="303.12" width="1" height="130.28"/><rect x="502" y="218.25" width="1" height="71.74" fill-opacity="0.433"/><rect x="502" y="289.99" width="1" height="143.41"/><rect x="503" y="218.25" width="1" height="41.10" fill-opacity="0.153"/><rect x="503" y="259.35" width="1" height="116.22" fill-opacity="0.414"/><rect x="503" y="375.57" width="1" height="57.83"/><rect x="504" y="214.36" width="1" height="38.12" fill-opacity="0.089"/><rect x="504" y="252.48" width="1" height="6.87" fill-opacity="0.675"/><rect x="504" y="259.35" width="1" height="174.05"/><rect x="505" y="214.36" width="1" height="106.79" fill-opacity="0.497"/><rect x="505" y="321.15" width="1" height="112.25"/><rect x="506" y="248.83" width="1" height="3.85" fill-opacity="0.331"/><rect x="506" y="252.68" width="1" height="68.47" fill-opacity="0.917"/><rect x="506" y="321.15" width="1" height="112.25"/><rect x="507" y="248.83" width="1" height="4.34" fill-opacity="0.255"/><rect x="507" y="253.17" width="1" height="72.94" fill-opacity="0.841"/><rect x="507" y="326.11" width="1" height="107.29"/><rect x="508" y="288.40" width="1" height="37.70" fill-opacity="0.573"/><rect x="508" y="326.11" width="1" height="107.29"/><rect x="509" y="285.50" width="1" height="2.90" fill-opacity="0.586"/><rect x="509" y="288.40" width="1" height="38.01" fill-opacity="0.599"/><rect x="509" y="326.41" width="1" height="106.99"/><rect x="510" y="217.07" width="1" height="83.98" fill-opacity="0.229"/><rect x="510" y="301.05" width="1" height="25.36" fill-opacity="0.815"/><rect x="510" y="326.41" width="1" height="106.99"/><rect x="511" y="217.07" width="1" height="48.85" fill-opacity="0.357"/><rect x="511" y="265.92" width="1" height="48.77" fill-opacity="0.943"/><rect x="511" y="314.69" width="1" height="118.71"/><rect x="512" y="245.12" width="1" height="69.57" fill-opacity="0.471"/><rect x="512" y="314.69" width="1" height="118.71"/><rect x="513" y="237.28" width="1" height="7.84" fill-opacity="0.586"/><rect x="513" y="245.12" width="1" height="103.69" fill-opacity="0.701"/><rect x="513" y="348.82" width="1" height="84.58"/><rect x="514" y="184.72" width="1" height="101.71" fill-opacity="0.127"/><rect x="514" y="286.43" width="1" height="62.38" fill-opacity="0.713"/><rect x="514" y="348.82" width="1" height="84.58"/><rect x="515" y="184.72" width="1" height="208.23" fill-opacity="0.459"/><rect x="515" y="392.95" width="1" height="40.45"/><rect x="516" y="188.74" width="1" height="28.89" fill-opacity="0.369"/><rect x="516" y="217.63" width="1" height="175.32" fill-opacity="0.955"/><rect x="516" y="392.95" width="1" height="40.45"/><rect x="517" y="188.74" width="1" height="49.85" fill-opacity="0.217"/><rect x="517" y="238.59" width="1" height="39.45" fill-opacity="0.414"/><rect x="517" y="278.04" width="1" height="155.36"/><rect x="518" y="228.49" width="1" height="2.92" fill-opacity="0.025"/><rect x="518" y="231.40" width="1" height="7.19" fill-opacity="0.611"/><rect x="518" y="238.59" width="1" height="194.81"/><rect x="519" y="227.01" width="1" height="1.48" fill-opacity="0.439"/><rect x="519" y="228.49" width="1" height="204.91"/><rect x="520" y="146.50" width="1" height="80.51" fill-opacity="0.586"/><rect x="520" y="227.01" width="1" height="71.90" fill-opacity="0.733"/><rect x="520" y="298.91" width="1" height="134.49"/><rect x="521" y="233.69" width="1" height="27.11" fill-opacity="0.095"/><rect x="521" y="260.79" width="1" height="38.12" fill-opacity="0.681"/><rect x="521" y="298.91" width="1" height="134.49"/><rect x="522" y="233.69" width="1" height="20.58" fill-opacity="0.491"/><rect x="522" y="254.26" width="1" height="179.14"/><rect x="523" y="149.71" width="1" height="104.55" fill-opacity="0.586"/><rect x="523" y="254.26" width="1" height="73.16" fill-opacity="0.663"/><rect x="523" y="327.42" width="1" height="105.98"/><rect x="524" y="256.59" width="1" height="17.02" fill-opacity="0.165"/><rect x="524" y="273.61" width="1" height="53.81" fill-opacity="0.751"/><rect x="524" y="327.42" width="1" height="105.98"/><rect x="525" y="254.96" width="1" height="1.63" fill-opacity="0.579"/><rect x="525" y="256.59" width="1" height="176.81"/><rect x="526" y="228.90" width="1" height="26.06" fill-opacity="0.407"/><rect x="526" y="254.96" width="1" height="22.83" fill-opacity="0.414"/><rect x="526" y="277.79" width="1" height="155.61"/><rect x="527" y="219.71" width="1" height="9.19" fill-opacity="0.235"/><rect x="527" y="228.90" width="1" height="88.93" fill-opacity="0.414"/><rect x="527" y="317.83" width="1" height="115.57"/><rect x="528" y="153.99" width="1" height="65.72" fill-opacity="0.586"/><rect x="528" y="219.71" width="1" height="119.05" fill-opacity="0.937"/><rect x="528" y="338.76" width="1" height="94.64"/><rect x="529" y="125.90" width="1" height="212.87" fill-opacity="0.477"/><rect x="529" y="338.76" width="1" height="94.64"/><rect x="530" y="125.90" width="1" height="89.08" fill-opacity="0.109"/><rect x="530" y="214.98" width="1" height="28.58" fill-opacity="0.695"/><rect x="530" y="243.56" width="1" height="189.84"/><rect x="531" y="146.50" width="1" height="97.06" fill-opacity="0.586"/><rect x="531" y="243.56" width="1" height="16.96" fill-opacity="0.867"/><rect x="531" y="260.52" width="1" height="172.88"/><rect x="532" y="260.52" width="1" height="16.67" fill-opacity="0.453"/><rect x="532" y="277.18" width="1" height="156.22"/><rect x="533" y="231.62" width="1" height="3.25" fill-opacity="0.586"/><rect x="533" y="234.87" width="1" height="42.31" fill-opacity="0.961"/><rect x="533" y="277.18" width="1" height="156.22"/><rect x="534" y="199.97" width="1" height="34.90" fill-opacity="0.203"/><rect x="534" y="234.87" width="1" height="74.21" fill-opacity="0.414"/><rect x="534" y="309.09" width="1" height="124.31"/><rect x="535" y="171.11" width="1" height="28.86" fill-opacity="0.031"/><rect x="535" y="199.97" width="1" height="23.23" fill-opacity="0.414"/><rect x="535" y="223.20" width="1" height="210.20"/><rect x="536" y="171.11" width="1" height="111.18" fill-opacity="0.555"/><rect x="536" y="282.28" width="1" height="151.12"/><rect x="537" y="233.87" width="1" height="20.51" fill-opacity="0.273"/><rect x="537" y="254.38" width="1" height="27.90" fill-opacity="0.859"/><rect x="537" y="282.28" width="1" height="151.12"/><rect x="538" y="155.05" width="1" height="56.69" fill-opacity="0.101"/><rect x="538" y="211.73" width="1" height="22.14" fill-opacity="0.687"/><rect x="538" y="233.87" width="1" height="199.53"/><rect x="539" y="155.05" width="1" height="111.80" fill-opacity="0.485"/><rect x="539" y="266.85" width="1" height="166.55"/><rect x="540" y="189.82" width="1" height="40.47" fill-opacity="0.343"/><rect x="540" y="230.30" width="1" height="36.55" fill-opacity="0.929"/><rect x="540" y="266.85" width="1" height="166.55"/><rect x="541" y="189.82" width="1" height="50.55" fill-opacity="0.243"/><rect x="541" y="240.37" width="1" height="61.66" fill-opacity="0.829"/><rect x="541" y="302.03" width="1" height="131.37"/><rect x="542" y="147.84" width="1" height="154.19" fill-opacity="0.585"/><rect x="542" y="302.03" width="1" height="131.37"/><rect x="543" y="147.84" width="1" height="69.03" fill-opacity="0.001"/><rect x="543" y="216.87" width="1" height="28.10" fill-opacity="0.414"/><rect x="543" y="244.97" width="1" height="188.43"/><rect x="544" y="145.16" width="1" height="71.71" fill-opacity="0.241"/><rect x="544" y="216.87" width="1" height="26.75" fill-opacity="0.414"/><rect x="544" y="243.62" width="1" height="189.78"/><rect x="545" y="145.16" width="1" height="81.32" fill-opacity="0.345"/><rect x="545" y="226.48" width="1" height="13.50" fill-opacity="0.414"/><rect x="545" y="239.98" width="1" height="193.42"/><rect x="546" y="210.92" width="1" height="15.56" fill-opacity="0.483"/><rect x="546" y="226.48" width="1" height="206.92"/><rect x="547" y="210.28" width="1" height="0.64" fill-opacity="0.586"/><rect x="547" y="210.92" width="1" height="24.21" fill-opacity="0.689"/><rect x="547" y="235.13" width="1" height="198.27"/><rect x="548" y="186.61" width="1" height="30.83" fill-opacity="0.586"/><rect x="548" y="217.44" width="1" height="17.69" fill-opacity="0.725"/><rect x="548" y="235.13" width="1" height="198.27"/><rect x="549" y="217.44" width="1" height="39.21" fill-opacity="0.447"/><rect x="549" y="256.65" width="1" height="176.75"/><rect x="550" y="187.40" width="1" height="68.42" fill-opacity="0.586"/><rect x="550" y="255.83" width="1" height="0.82" fill-opacity="0.967"/><rect x="550" y="256.65" width="1" height="176.75"/><rect x="551" y="164.67" width="1" height="91.16" fill-opacity="0.586"/><rect x="551" y="255.83" width="1" height="43.60" fill-opacity="0.791"/><rect x="551" y="299.42" width="1" height="133.98"/><rect x="552" y="223.52" width="1" height="4.76" fill-opacity="0.586"/><rect x="552" y="228.28" width="1" height="71.14" fill-opacity="0.623"/><rect x="552" y="299.42" width="1" height="133.98"/><rect x="553" y="212.19" width="1" height="16.09" fill-opacity="0.452"/><rect x="553" y="228.28" width="1" height="205.12"/><rect x="554" y="206.67" width="1" height="5.53" fill-opacity="0.586"/><rect x="554" y="212.19" width="1" height="0.27" fill-opacity="0.720"/><rect x="554" y="212.47" width="1" height="220.93"/><rect x="555" y="197.84" width="1" height="14.63" fill-opacity="0.108"/><rect x="555" y="212.47" width="1" height="79.73" fill-opacity="0.414"/><rect x="555" y="292.20" width="1" height="141.20"/><rect x="556" y="197.84" width="1" height="28.49" fill-opacity="0.478"/><rect x="556" y="226.33" width="1" height="207.07"/><rect x="557" y="201.31" width="1" height="25.02" fill-opacity="0.350"/><rect x="557" y="226.33" width="1" height="15.50" fill-opacity="0.414"/><rect x="557" y="241.82" width="1" height="191.58"/><rect x="558" y="201.31" width="1" height="39.10" fill-opacity="0.236"/><rect x="558" y="240.40" width="1" height="22.34" fill-opacity="0.822"/><rect x="558" y="262.74" width="1" height="170.66"/><rect x="559" y="240.33" width="1" height="8.55" fill-opacity="0.006"/><rect x="559" y="248.88" width="1" height="13.86" fill-opacity="0.592"/><rect x="559" y="262.74" width="1" height="170.66"/><rect x="560" y="216.62" width="1" height="23.71" fill-opacity="0.420"/><rect x="560" y="240.33" width="1" height="193.07"/><rect x="561" y="216.62" width="1" height="15.14" fill-opacity="0.166"/><rect x="561" y="231.76" width="1" height="4.45" fill-opacity="0.414"/><rect x="561" y="236.21" width="1" height="197.19"/><rect x="562" y="163.06" width="1" height="6.97" fill-opacity="0.586"/><rect x="562" y="170.03" width="1" height="61.73" fill-opacity="0.662"/><rect x="562" y="231.76" width="1" height="201.64"/><rect x="563" y="170.03" width="1" height="169.43" fill-opacity="0.510"/><rect x="563" y="339.46" width="1" height="93.94"/><rect x="564" y="213.91" width="1" height="125.55" fill-opacity="0.586"/><rect x="564" y="339.46" width="1" height="20.73" fill-opacity="0.682"/><rect x="564" y="360.19" width="1" height="73.21"/><rect x="565" y="181.25" width="1" height="138.15" fill-opacity="0.586"/><rect x="565" y="319.40" width="1" height="40.79" fill-opacity="0.732"/><rect x="565" y="360.19" width="1" height="73.21"/><rect x="566" y="319.40" width="1" height="41.45" fill-opacity="0.440"/><rect x="566" y="360.85" width="1" height="72.55"/><rect x="567" y="225.65" width="1" height="40.12" fill-opacity="0.388"/><rect x="567" y="265.77" width="1" height="95.08" fill-opacity="0.974"/><rect x="567" y="360.85" width="1" height="72.55"/><rect x="568" y="224.76" width="1" height="0.90" fill-opacity="0.586"/><rect x="568" y="225.65" width="1" height="23.47" fill-opacity="0.784"/><rect x="568" y="249.12" width="1" height="184.28"/><rect x="569" y="232.19" width="1" height="16.93" fill-opacity="0.044"/><rect x="569" y="249.12" width="1" height="27.86" fill-opacity="0.414"/><rect x="569" y="276.98" width="1" height="156.42"/><rect x="570" y="219.50" width="1" height="12.69" fill-opacity="0.458"/><rect x="570" y="232.19" width="1" height="201.21"/><rect x="571" y="178.57" width="1" height="40.93" fill-opacity="0.586"/><rect x="571" y="219.50" width="1" height="51.38" fill-opacity="0.714"/><rect x="571" y="270.88" width="1" height="162.52"/><rect x="572" y="125.11" width="1" height="59.35" fill-opacity="0.586"/><rect x="572" y="184.46" width="1" height="86.42" fill-opacity="0.700"/><rect x="572" y="270.88" width="1" height="162.52"/><rect x="573" y="184.46" width="1" height="92.36" fill-opacity="0.472"/><rect x="573" y="276.82" width="1" height="156.58"/><rect x="574" y="146.50" width="1" height="78.41" fill-opacity="0.356"/><rect x="574" y="224.92" width="1" height="51.90" fill-opacity="0.942"/><rect x="574" y="276.82" width="1" height="156.58"/><rect x="575" y="146.50" width="1" height="108.11" fill-opacity="0.230"/><rect x="575" y="254.61" width="1" height="13.27" fill-opacity="0.414"/><rect x="575" y="267.88" width="1" height="165.52"/><rect x="576" y="217.86" width="1" height="36.75" fill-opacity="0.586"/><rect x="576" y="254.61" width="1" height="25.45" fill-opacity="0.988"/><rect x="576" y="280.06" width="1" height="153.34"/><rect x="577" y="280.06" width="1" height="19.66" fill-opacity="0.574"/><rect x="577" y="299.72" width="1" height="133.68"/><rect x="578" y="162.54" width="1" height="58.30" fill-opacity="0.254"/><rect x="578" y="220.83" width="1" height="78.89" fill-opacity="0.840"/><rect x="578" y="299.72" width="1" height="133.68"/><rect x="579" y="162.54" width="1" height="66.86" fill-opacity="0.332"/><rect x="579" y="229.40" width="1" height="83.58" fill-opacity="0.918"/><rect x="579" y="312.98" width="1" height="120.42"/><rect x="580" y="163.88" width="1" height="149.10" fill-opacity="0.496"/><rect x="580" y="312.98" width="1" height="120.42"/><rect x="581" y="163.88" width="1" height="117.28" fill-opacity="0.090"/><rect x="581" y="281.16" width="1" height="103.78" fill-opacity="0.676"/><rect x="581" y="384.93" width="1" height="48.47"/><rect x="582" y="281.77" width="1" height="43.07" fill-opacity="0.152"/><rect x="582" y="324.84" width="1" height="60.09" fill-opacity="0.738"/><rect x="582" y="384.93" width="1" height="48.47"/><rect x="583" y="281.77" width="1" height="7.12" fill-opacity="0.434"/><rect x="583" y="288.89" width="1" height="144.51"/><rect x="584" y="223.97" width="1" height="63.70" fill-opacity="0.394"/><rect x="584" y="287.68" width="1" height="1.22" fill-opacity="0.980"/><rect x="584" y="288.89" width="1" height="144.51"/><rect x="585" y="141.14" width="1" height="82.83" fill-opacity="0.586"/><rect x="585" y="223.97" width="1" height="93.02" fill-opacity="0.778"/><rect x="585" y="316.99" width="1" height="116.41"/><rect x="586" y="219.88" width="1" height="7.13" fill-opacity="0.586"/><rect x="586" y="227.01" width="1" height="89.98" fill-opacity="0.636"/><rect x="586" y="316.99" width="1" height="116.41"/><rect x="587" y="227.01" width="1" height="112.45" fill-opacity="0.536"/><rect x="587" y="339.46" width="1" height="93.94"/><rect x="588" y="286.63" width="1" height="30.35" fill-opacity="0.292"/><rect x="588" y="316.98" width="1" height="22.47" fill-opacity="0.878"/><rect x="588" y="339.46" width="1" height="93.94"/><rect x="589" y="224.16" width="1" height="28.12" fill-opacity="0.120"/><rect x="589" y="252.27" width="1" height="34.36" fill-opacity="0.706"/><rect x="589" y="286.63" width="1" height="146.77"/><rect x="590" y="208.54" width="1" height="15.62" fill-opacity="0.534"/><rect x="590" y="224.16" width="1" height="209.24"/><rect x="591" y="188.74" width="1" height="19.79" fill-opacity="0.362"/><rect x="591" y="208.54" width="1" height="94.03" fill-opacity="0.414"/><rect x="591" y="302.56" width="1" height="130.84"/><rect x="592" y="188.74" width="1" height="29.05" fill-opacity="0.224"/><rect x="592" y="217.79" width="1" height="28.19" fill-opacity="0.810"/><rect x="592" y="245.98" width="1" height="187.42"/><rect x="593" y="220.08" width="1" height="25.90" fill-opacity="0.018"/><rect x="593" y="245.98" width="1" height="24.70" fill-opacity="0.414"/><rect x="593" y="270.68" width="1" height="162.72"/><rect x="594" y="220.08" width="1" height="4.22" fill-opacity="0.568"/><rect x="594" y="224.30" width="1" height="209.10"/><rect x="595" y="164.67" width="1" height="59.63" fill-opacity="0.586"/><rect x="595" y="224.30" width="1" height="27.41" fill-opacity="0.740"/><rect x="595" y="251.71" width="1" height="181.69"/><rect x="596" y="166.56" width="1" height="59.97" fill-opacity="0.586"/><rect x="596" y="226.53" width="1" height="25.18" fill-opacity="0.674"/><rect x="596" y="251.71" width="1" height="181.69"/><rect x="597" y="226.53" width="1" height="151.70" fill-opacity="0.498"/><rect x="597" y="378.23" width="1" height="55.17"/><rect x="598" y="235.94" width="1" height="2.74" fill-opacity="0.330"/><rect x="598" y="238.67" width="1" height="139.56" fill-opacity="0.916"/><rect x="598" y="378.23" width="1" height="55.17"/><rect x="599" y="201.31" width="1" height="11.22" fill-opacity="0.158"/><rect x="599" y="212.53" width="1" height="23.41" fill-opacity="0.744"/><rect x="599" y="235.94" width="1" height="197.46"/><rect x="600" y="201.31" width="1" height="19.37" fill-opacity="0.428"/><rect x="600" y="220.68" width="1" height="212.72"/><rect x="601" y="146.50" width="1" height="74.18" fill-opacity="0.586"/><rect x="601" y="220.68" width="1" height="58.56" fill-opacity="0.600"/><rect x="601" y="279.24" width="1" height="154.16"/><rect x="602" y="235.65" width="1" height="14.50" fill-opacity="0.228"/><rect x="602" y="250.15" width="1" height="29.09" fill-opacity="0.814"/><rect x="602" y="279.24" width="1" height="154.16"/><rect x="603" y="226.10" width="1" height="9.55" fill-opacity="0.586"/><rect x="603" y="235.65" width="1" height="0.68" fill-opacity="0.944"/><rect x="603" y="236.33" width="1" height="197.07"/><rect x="604" y="236.33" width="1" height="88.44" fill-opacity="0.530"/><rect x="604" y="324.77" width="1" height="108.63"/><rect x="605" y="185.27" width="1" height="79.63" fill-opacity="0.586"/><rect x="605" y="264.91" width="1" height="59.86" fill-opacity="0.884"/><rect x="605" y="324.77" width="1" height="108.63"/><rect x="606" y="171.89" width="1" height="80.39" fill-opacity="0.586"/><rect x="606" y="252.28" width="1" height="12.63" fill-opacity="0.712"/><rect x="606" y="264.91" width="1" height="168.49"/><rect x="607" y="252.28" width="1" height="95.47" fill-opacity="0.460"/><rect x="607" y="347.75" width="1" height="85.65"/><rect x="608" y="177.26" width="1" height="60.00" fill-opacity="0.368"/><rect x="608" y="237.26" width="1" height="110.49" fill-opacity="0.954"/><rect x="608" y="347.75" width="1" height="85.65"/><rect x="609" y="168.42" width="1" height="8.83" fill-opacity="0.196"/><rect x="609" y="177.26" width="1" height="57.83" fill-opacity="0.414"/><rect x="609" y="235.08" width="1" height="198.32"/><rect x="610" y="168.42" width="1" height="76.77" fill-opacity="0.390"/><rect x="610" y="245.19" width="1" height="36.19" fill-opacity="0.976"/><rect x="610" y="281.38" width="1" height="152.02"/><rect x="611" y="233.70" width="1" height="47.68" fill-opacity="0.438"/><rect x="611" y="281.38" width="1" height="152.02"/><rect x="612" y="219.67" width="1" height="14.03" fill-opacity="0.266"/><rect x="612" y="233.70" width="1" height="36.03" fill-opacity="0.414"/><rect x="612" y="269.74" width="1" height="163.66"/><rect x="613" y="198.63" width="1" height="21.04" fill-opacity="0.586"/><rect x="613" y="219.67" width="1" height="46.80" fill-opacity="0.906"/><rect x="613" y="266.47" width="1" height="166.93"/><rect x="614" y="266.47" width="1" height="8.08" fill-opacity="0.492"/><rect x="614" y="274.55" width="1" height="158.85"/><rect x="615" y="223.12" width="1" height="51.43" fill-opacity="0.336"/><rect x="615" y="274.55" width="1" height="80.97" fill-opacity="0.414"/><rect x="615" y="355.52" width="1" height="77.88"/><rect x="616" y="196.76" width="1" height="26.36" fill-opacity="0.586"/><rect x="616" y="223.12" width="1" height="56.03" fill-opacity="0.836"/><rect x="616" y="279.15" width="1" height="154.25"/><rect x="617" y="279.15" width="1" height="60.12" fill-opacity="0.422"/><rect x="617" y="339.28" width="1" height="94.12"/><rect x="618" y="265.78" width="1" height="73.50" fill-opacity="0.406"/><rect x="618" y="339.28" width="1" height="33.62" fill-opacity="0.414"/><rect x="618" y="372.89" width="1" height="60.51"/><rect x="619" y="196.76" width="1" height="32.46" fill-opacity="0.586"/><rect x="619" y="229.22" width="1" height="36.56" fill-opacity="0.820"/><rect x="619" y="265.78" width="1" height="167.62"/><rect x="620" y="219.63" width="1" height="9.58" fill-opacity="0.062"/><rect x="620" y="229.22" width="1" height="22.90" fill-opacity="0.414"/><rect x="620" y="252.11" width="1" height="181.29"/><rect x="621" y="198.63" width="1" height="21.00" fill-opacity="0.476"/><rect x="621" y="219.63" width="1" height="213.77"/><rect x="622" y="198.63" width="1" height="45.59" fill-opacity="0.110"/><rect x="622" y="244.22" width="1" height="75.19" fill-opacity="0.696"/><rect x="622" y="319.40" width="1" height="114.00"/><rect x="623" y="236.26" width="1" height="83.14" fill-opacity="0.586"/><rect x="623" y="319.40" width="1" height="1.03" fill-opacity="0.868"/><rect x="623" y="320.43" width="1" height="112.97"/><rect x="624" y="254.74" width="1" height="65.69" fill-opacity="0.546"/><rect x="624" y="320.43" width="1" height="112.97"/><rect x="625" y="210.50" width="1" height="44.24" fill-opacity="0.374"/><rect x="625" y="254.74" width="1" height="28.02" fill-opacity="0.414"/><rect x="625" y="282.76" width="1" height="150.64"/><rect x="626" y="210.50" width="1" height="14.30" fill-opacity="0.212"/><rect x="626" y="224.80" width="1" height="24.79" fill-opacity="0.414"/><rect x="626" y="249.58" width="1" height="183.82"/><rect x="627" y="153.18" width="1" height="64.00" fill-opacity="0.030"/><rect x="627" y="217.18" width="1" height="7.61" fill-opacity="0.616"/><rect x="627" y="224.80" width="1" height="208.60"/><rect x="628" y="153.18" width="1" height="98.12" fill-opacity="0.556"/><rect x="628" y="251.30" width="1" height="182.10"/><rect x="629" y="244.80" width="1" height="6.50" fill-opacity="0.586"/><rect x="629" y="251.30" width="1" height="22.05" fill-opacity="0.728"/><rect x="629" y="273.36" width="1" height="160.04"/><rect x="630" y="161.20" width="1" height="112.16" fill-opacity="0.100"/><rect x="630" y="273.36" width="1" height="71.46" fill-opacity="0.414"/><rect x="630" y="344.82" width="1" height="88.58"/><rect x="631" y="161.20" width="1" height="117.71" fill-opacity="0.486"/><rect x="631" y="278.90" width="1" height="154.50"/><rect x="632" y="248.95" width="1" height="16.56" fill-opacity="0.342"/><rect x="632" y="265.51" width="1" height="13.40" fill-opacity="0.928"/><rect x="632" y="278.90" width="1" height="154.50"/><rect x="633" y="170.03" width="1" height="78.92" fill-opacity="0.586"/><rect x="633" y="248.95" width="1" height="105.23" fill-opacity="0.830"/><rect x="633" y="354.18" width="1" height="79.22"/><rect x="634" y="237.91" width="1" height="116.27" fill-opacity="0.584"/><rect x="634" y="354.18" width="1" height="79.22"/><rect x="635" y="237.91" width="1" height="6.60" fill-opacity="0.002"/><rect x="635" y="244.51" width="1" height="56.79" fill-opacity="0.588"/><rect x="635" y="301.30" width="1" height="132.10"/><rect x="636" y="193.29" width="1" height="23.94" fill-opacity="0.586"/><rect x="636" y="217.23" width="1" height="84.08" fill-opacity="0.826"/><rect x="636" y="301.30" width="1" height="132.10"/><rect x="637" y="217.23" width="1" height="8.56" fill-opacity="0.346"/><rect x="637" y="225.79" width="1" height="7.47" fill-opacity="0.414"/><rect x="637" y="233.26" width="1" height="200.14"/><rect x="638" y="225.79" width="1" height="23.50" fill-opacity="0.518"/><rect x="638" y="249.29" width="1" height="184.11"/><rect x="639" y="232.94" width="1" height="16.35" fill-opacity="0.310"/><rect x="639" y="249.29" width="1" height="50.46" fill-opacity="0.414"/><rect x="639" y="299.75" width="1" height="133.65"/><rect x="640" y="197.31" width="1" height="35.63" fill-opacity="0.586"/><rect x="640" y="232.94" width="1" height="33.06" fill-opacity="0.862"/><rect x="640" y="266.01" width="1" height="167.39"/><rect x="641" y="266.01" width="1" height="64.09" fill-opacity="0.448"/><rect x="641" y="330.10" width="1" height="103.30"/><rect x="642" y="239.72" width="1" height="19.45" fill-opacity="0.380"/><rect x="642" y="259.17" width="1" height="70.94" fill-opacity="0.966"/><rect x="642" y="330.10" width="1" height="103.30"/><rect x="643" y="239.67" width="1" height="0.05" fill-opacity="0.586"/><rect x="643" y="239.72" width="1" height="15.53" fill-opacity="0.792"/><rect x="643" y="255.25" width="1" height="178.15"/><rect x="644" y="219.28" width="1" height="35.85" fill-opacity="0.036"/><rect x="644" y="255.12" width="1" height="0.13" fill-opacity="0.622"/><rect x="644" y="255.25" width="1" height="178.15"/><rect x="645" y="219.28" width="1" height="122.86" fill-opacity="0.550"/><rect x="645" y="342.14" width="1" height="91.26"/><rect x="646" y="251.27" width="1" height="1.60" fill-opacity="0.586"/><rect x="646" y="252.87" width="1" height="89.26" fill-opacity="0.864"/><rect x="646" y="342.14" width="1" height="91.26"/><rect x="647" y="148.37" width="1" height="81.92" fill-opacity="0.106"/><rect x="647" y="230.29" width="1" height="22.58" fill-opacity="0.692"/><rect x="647" y="252.87" width="1" height="180.53"/><rect x="648" y="148.37" width="1" height="212.27" fill-opacity="0.480"/><rect x="648" y="360.64" width="1" height="72.76"/><rect x="649" y="225.26" width="1" height="2.07" fill-opacity="0.586"/><rect x="649" y="227.33" width="1" height="133.31" fill-opacity="0.934"/><rect x="649" y="360.64" width="1" height="72.76"/><rect x="650" y="97.04" width="1" height="130.29" fill-opacity="0.586"/><rect x="650" y="227.33" width="1" height="17.84" fill-opacity="0.824"/><rect x="650" y="245.17" width="1" height="188.23"/><rect x="651" y="220.59" width="1" height="24.58" fill-opacity="0.586"/><rect x="651" y="245.17" width="1" height="60.14"/><rect x="651" y="305.31" width="1" height="128.09"/><rect x="652" y="281.42" width="1" height="23.89" fill-opacity="0.418"/><rect x="652" y="305.31" width="1" height="128.09"/><rect x="653" y="170.03" width="1" height="59.52" fill-opacity="0.586"/><rect x="653" y="229.55" width="1" height="51.87" fill-opacity="0.832"/><rect x="653" y="281.42" width="1" height="151.98"/><rect x="654" y="194.08" width="1" height="35.47" fill-opacity="0.074"/><rect x="654" y="229.55" width="1" height="27.59" fill-opacity="0.414"/><rect x="654" y="257.14" width="1" height="176.26"/><rect x="655" y="194.08" width="1" height="45.96" fill-opacity="0.512"/><rect x="655" y="240.04" width="1" height="193.36"/><rect x="656" y="220.06" width="1" height="19.98" fill-opacity="0.586"/><rect x="656" y="240.04" width="1" height="30.32" fill-opacity="0.684"/><rect x="656" y="270.36" width="1" height="163.04"/><rect x="657" y="190.61" width="1" height="79.75" fill-opacity="0.144"/><rect x="657" y="270.36" width="1" height="14.47" fill-opacity="0.414"/><rect x="657" y="284.83" width="1" height="148.57"/><rect x="658" y="133.12" width="1" height="57.48" fill-opacity="0.558"/><rect x="658" y="190.61" width="1" height="242.79"/><rect x="659" y="133.12" width="1" height="100.30" fill-opacity="0.028"/><rect x="659" y="233.42" width="1" height="15.16" fill-opacity="0.414"/><rect x="659" y="248.58" width="1" height="184.82"/><rect x="660" y="233.42" width="1" height="199.98" fill-opacity="0.200"/></g>
<g fill="none" stroke="#8c8c8c" stroke-width="1">
<path d="M231.25 91.70V433.90"/>
<path d="M226 433.40H231.25"/>
<path d="M226 407.12H231.25"/>
<path d="M226 380.83H231.25"/>
<path d="M226 354.55H231.25"/>
<path d="M226 328.26H231.25"/>
<path d="M226 301.98H231.25"/>
<path d="M226 275.69H231.25"/>
<path d="M226 249.41H231.25"/>
<path d="M226 223.12H231.25"/>
<path d="M226 196.84H231.25"/>
<path d="M226 170.55H231.25"/>
<path d="M226 144.27H231.25"/>
<path d="M226 117.98H231.25"/>
<path d="M226 91.70H231.25"/>
<path d="M226 433.40H660.2"/>
</g>
<g font-family="Liberation Sans" font-size="7.6" fill="#858585" text-anchor="end">
<text x="224.2" y="436.10">0</text>
<text x="224.2" y="409.82">100</text>
<text x="224.2" y="383.53">200</text>
<text x="224.2" y="357.25">300</text>
<text x="224.2" y="330.96">400</text>
<text x="224.2" y="304.68">500</text>
<text x="224.2" y="278.39">600</text>
<text x="224.2" y="252.11">700</text>
<text x="224.2" y="225.82">800</text>
<text x="224.2" y="199.54">900</text>
<text x="224.2" y="173.25">1,000</text>
<text x="224.2" y="146.97">1,100</text>
<text x="224.2" y="120.68">1,200</text>
<text x="224.2" y="94.40">1,300</text>
</g>
<g font-family="Liberation Sans" font-size="8.2" fill="#8a8a8a" text-anchor="end">
<text transform="translate(231.54 440.8) rotate(-90) scale(0.9 1)" x="0" y="2.9">2012&#8211;01&#8211;01</text>
<text transform="translate(240.33 440.8) rotate(-90) scale(0.9 1)" x="0" y="2.9">2012&#8211;01&#8211;16</text>
<text transform="translate(249.12 440.8) rotate(-90) scale(0.9 1)" x="0" y="2.9">2012&#8211;01&#8211;31</text>
<text transform="translate(257.91 440.8) rotate(-90) scale(0.9 1)" x="0" y="2.9">2012&#8211;02&#8211;15</text>
<text transform="translate(266.70 440.8) rotate(-90) scale(0.9 1)" x="0" y="2.9">2012&#8211;03&#8211;02</text>
<text transform="translate(275.49 440.8) rotate(-90) scale(0.9 1)" x="0" y="2.9">2012&#8211;03&#8211;17</text>
<text transform="translate(284.28 440.8) rotate(-90) scale(0.9 1)" x="0" y="2.9">2012&#8211;04&#8211;01</text>
<text transform="translate(293.07 440.8) rotate(-90) scale(0.9 1)" x="0" y="2.9">2012&#8211;04&#8211;16</text>
<text transform="translate(301.86 440.8) rotate(-90) scale(0.9 1)" x="0" y="2.9">2012&#8211;05&#8211;01</text>
<text transform="translate(310.65 440.8) rotate(-90) scale(0.9 1)" x="0" y="2.9">2012&#8211;05&#8211;16</text>
<text transform="translate(319.44 440.8) rotate(-90) scale(0.9 1)" x="0" y="2.9">2012&#8211;05&#8211;31</text>
<text transform="translate(328.23 440.8) rotate(-90) scale(0.9 1)" x="0" y="2.9">2012&#8211;06&#8211;15</text>
<text transform="translate(337.02 440.8) rotate(-90) scale(0.9 1)" x="0" y="2.9">2012&#8211;06&#8211;30</text>
<text transform="translate(345.81 440.8) rotate(-90) scale(0.9 1)" x="0" y="2.9">2012&#8211;07&#8211;15</text>
<text transform="translate(354.60 440.8) rotate(-90) scale(0.9 1)" x="0" y="2.9">2012&#8211;07&#8211;30</text>
<text transform="translate(363.39 440.8) rotate(-90) scale(0.9 1)" x="0" y="2.9">2012&#8211;08&#8211;14</text>
<text transform="translate(372.18 440.8) rotate(-90) scale(0.9 1)" x="0" y="2.9">2012&#8211;08&#8211;29</text>
<text transform="translate(380.97 440.8) rotate(-90) scale(0.9 1)" x="0" y="2.9">2012&#8211;09&#8211;13</text>
<text transform="translate(389.76 440.8) rotate(-90) scale(0.9 1)" x="0" y="2.9">2012&#8211;09&#8211;28</text>
<text transform="translate(398.55 440.8) rotate(-90) scale(0.9 1)" x="0" y="2.9">2012&#8211;10&#8211;13</text>
<text transform="translate(407.34 440.8) rotate(-90) scale(0.9 1)" x="0" y="2.9">2012&#8211;10&#8211;28</text>
<text transform="translate(416.13 440.8) rotate(-90) scale(0.9 1)" x="0" y="2.9">2012&#8211;11&#8211;12</text>
<text transform="translate(424.92 440.8) rotate(-90) scale(0.9 1)" x="0" y="2.9">2012&#8211;11&#8211;27</text>
<text transform="translate(433.71 440.8) rotate(-90) scale(0.9 1)" x="0" y="2.9">2012&#8211;12&#8211;12</text>
<text transform="translate(442.50 440.8) rotate(-90) scale(0.9 1)" x="0" y="2.9">2012&#8211;12&#8211;27</text>
<text transform="translate(451.29 440.8) rotate(-90) scale(0.9 1)" x="0" y="2.9">2013&#8211;01&#8211;11</text>
<text transform="translate(460.08 440.8) rotate(-90) scale(0.9 1)" x="0" y="2.9">2013&#8211;01&#8211;26</text>
<text transform="translate(468.87 440.8) rotate(-90) scale(0.9 1)" x="0" y="2.9">2013&#8211;02&#8211;10</text>
<text transform="translate(477.66 440.8) rotate(-90) scale(0.9 1)" x="0" y="2.9">2013&#8211;02&#8211;25</text>
<text transform="translate(486.45 440.8) rotate(-90) scale(0.9 1)" x="0" y="2.9">2013&#8211;03&#8211;12</text>
<text transform="translate(495.24 440.8) rotate(-90) scale(0.9 1)" x="0" y="2.9">2013&#8211;03&#8211;27</text>
<text transform="translate(504.03 440.8) rotate(-90) scale(0.9 1)" x="0" y="2.9">2013&#8211;04&#8211;11</text>
<text transform="translate(512.82 440.8) rotate(-90) scale(0.9 1)" x="0" y="2.9">2013&#8211;04&#8211;26</text>
<text transform="translate(521.61 440.8) rotate(-90) scale(0.9 1)" x="0" y="2.9">2013&#8211;05&#8211;11</text>
<text transform="translate(530.40 440.8) rotate(-90) scale(0.9 1)" x="0" y="2.9">2013&#8211;05&#8211;26</text>
<text transform="translate(539.19 440.8) rotate(-90) scale(0.9 1)" x="0" y="2.9">2013&#8211;06&#8211;10</text>
<text transform="translate(547.98 440.8) rotate(-90) scale(0.9 1)" x="0" y="2.9">2013&#8211;06&#8211;25</text>
<text transform="translate(556.77 440.8) rotate(-90) scale(0.9 1)" x="0" y="2.9">2013&#8211;07&#8211;10</text>
<text transform="translate(565.56 440.8) rotate(-90) scale(0.9 1)" x="0" y="2.9">2013&#8211;07&#8211;25</text>
<text transform="translate(574.35 440.8) rotate(-90) scale(0.9 1)" x="0" y="2.9">2013&#8211;08&#8211;09</text>
<text transform="translate(583.14 440.8) rotate(-90) scale(0.9 1)" x="0" y="2.9">2013&#8211;08&#8211;24</text>
<text transform="translate(591.93 440.8) rotate(-90) scale(0.9 1)" x="0" y="2.9">2013&#8211;09&#8211;08</text>
<text transform="translate(600.72 440.8) rotate(-90) scale(0.9 1)" x="0" y="2.9">2013&#8211;09&#8211;23</text>
<text transform="translate(609.51 440.8) rotate(-90) scale(0.9 1)" x="0" y="2.9">2013&#8211;10&#8211;08</text>
<text transform="translate(618.30 440.8) rotate(-90) scale(0.9 1)" x="0" y="2.9">2013&#8211;10&#8211;23</text>
<text transform="translate(627.09 440.8) rotate(-90) scale(0.9 1)" x="0" y="2.9">2013&#8211;11&#8211;07</text>
<text transform="translate(635.88 440.8) rotate(-90) scale(0.9 1)" x="0" y="2.9">2013&#8211;11&#8211;22</text>
<text transform="translate(644.67 440.8) rotate(-90) scale(0.9 1)" x="0" y="2.9">2013&#8211;12&#8211;07</text>
<text transform="translate(653.46 440.8) rotate(-90) scale(0.9 1)" x="0" y="2.9">2013&#8211;12&#8211;22</text>
</g>
</svg>
<div class="a" style="left:605.2px;top:70.2px;width:7.4px;height:7.4px;background:#0a8ad2"></div>
<div class="a" style="left:618px;top:69px;font-size:8px;color:#333;line-height:10px">GMV_SUM</div>
<div class="info" style="left:549.7px">Info:</div>
<div class="info" style="left:574.7px">16:04</div>
<div class="info" style="left:608.8px">/</div>
<div class="info" style="left:616.2px">2 x 732</div>
<div class="info" style="left:650.8px">/</div>
<div class="info" style="left:658.7px">0.60s</div>

</body></html>
